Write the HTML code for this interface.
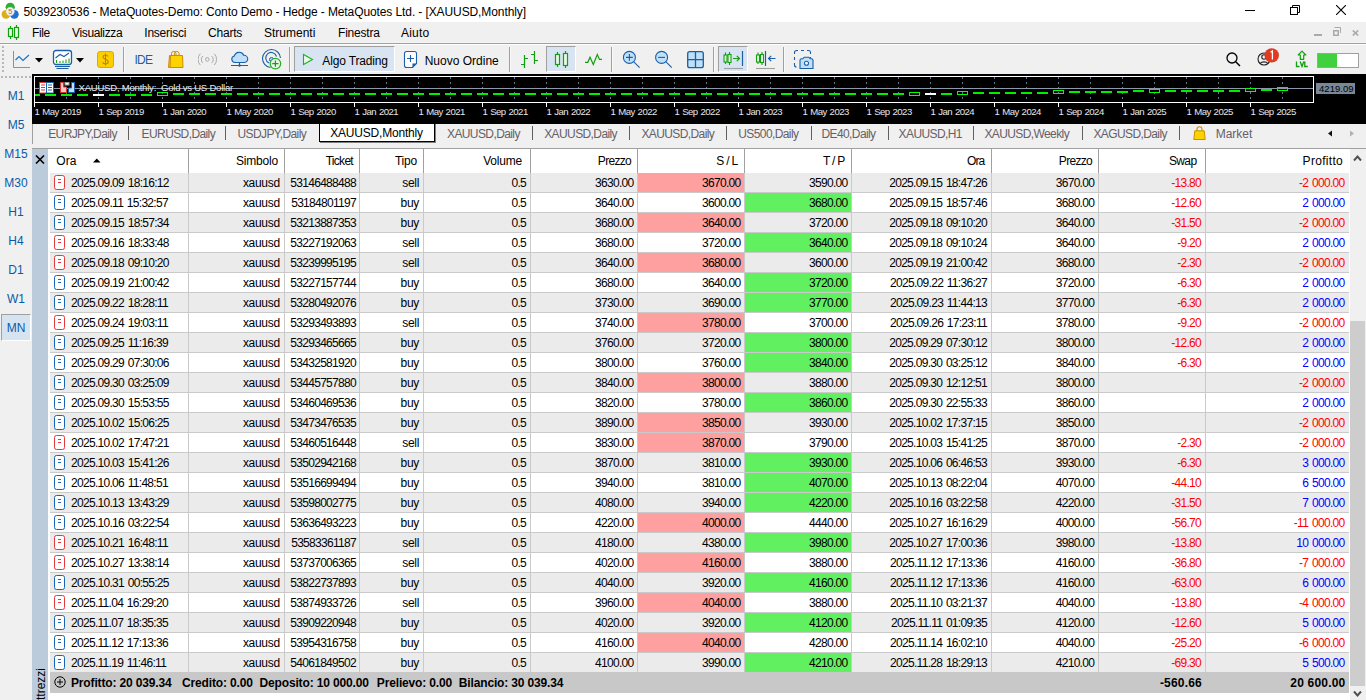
<!DOCTYPE html>
<html><head><meta charset="utf-8"><title>MetaTrader 5</title>
<style>
html,body{margin:0;padding:0;}
body{width:1366px;height:700px;overflow:hidden;position:relative;background:#f0f0f0;font-family:"Liberation Sans", sans-serif;font-size:12px;}
svg{display:block;}
</style></head><body>
<div style="position:absolute;left:0px;top:0px;width:1366px;height:22px;background:#ffffff;"></div>
<svg style="position:absolute;left:0px;top:0px;" width="22" height="22" viewBox="0 0 22 22">
<circle cx="10.2" cy="7.3" r="4.6" fill="#2fae2f"/>
<circle cx="6" cy="14.3" r="4.4" fill="#dcae18"/>
<circle cx="14.3" cy="14.3" r="4.4" fill="#1f6fd8"/>
<circle cx="10.2" cy="11.5" r="4.2" fill="#f2f2f2" stroke="#d0d0d0" stroke-width="0.5"/>
<text x="10.3" y="14.3" font-size="7.5" font-family="Liberation Sans" font-weight="400" fill="#e05a10" text-anchor="middle">5</text>
</svg>
<div style="position:absolute;left:23.5px;top:5.84px;font-size:12px;line-height:12px;color:#000;font-weight:400;letter-spacing:-0.1px;white-space:pre;">5039230536 - MetaQuotes-Demo: Conto Demo - Hedge - MetaQuotes Ltd. - [XAUUSD,Monthly]</div>
<div style="position:absolute;left:1245px;top:10px;width:10px;height:1px;background:#000;"></div>
<svg style="position:absolute;left:1290px;top:5px;" width="11" height="11" viewBox="0 0 11 11"><rect x="0.5" y="2.5" width="7" height="7" fill="none" stroke="#000"/><path d="M2.5 2.5V0.5H9.5V7.5H7.5" fill="none" stroke="#000"/></svg>
<svg style="position:absolute;left:1336px;top:5px;" width="10" height="10" viewBox="0 0 10 10"><path d="M0 0L10 10M10 0L0 10" stroke="#000" stroke-width="1.1"/></svg>
<div style="position:absolute;left:0px;top:22px;width:1366px;height:20px;background:#f0f0f0;"></div>
<div style="position:absolute;left:0px;top:42px;width:1366px;height:1px;background:#f4f4f4;"></div>
<div style="position:absolute;left:0px;top:43px;width:1366px;height:1px;background:#a0a0a0;"></div>
<div style="position:absolute;left:0px;top:44px;width:1366px;height:1px;background:#ffffff;"></div>
<svg style="position:absolute;left:7px;top:24px;" width="14" height="17" viewBox="0 0 14 17">
<path d="M3.5 2V15M9.5 1V16" stroke="#10a010" stroke-width="1.2"/>
<rect x="1.5" y="4.5" width="4" height="8" fill="#e8f8e8" stroke="#10a010" stroke-width="1.2"/>
<rect x="7.5" y="3.5" width="4" height="10" fill="#e8f8e8" stroke="#10a010" stroke-width="1.2"/>
</svg>
<div style="position:absolute;left:32px;top:26.84px;font-size:12px;line-height:12px;color:#000;font-weight:400;letter-spacing:-0.4px;white-space:pre;">File</div>
<div style="position:absolute;left:72px;top:26.84px;font-size:12px;line-height:12px;color:#000;font-weight:400;letter-spacing:-0.35px;white-space:pre;">Visualizza</div>
<div style="position:absolute;left:144.3px;top:26.84px;font-size:12px;line-height:12px;color:#000;font-weight:400;letter-spacing:-0.25px;white-space:pre;">Inserisci</div>
<div style="position:absolute;left:208px;top:26.84px;font-size:12px;line-height:12px;color:#000;font-weight:400;letter-spacing:-0.2px;white-space:pre;">Charts</div>
<div style="position:absolute;left:264px;top:26.84px;font-size:12px;line-height:12px;color:#000;font-weight:400;white-space:pre;">Strumenti</div>
<div style="position:absolute;left:338px;top:26.84px;font-size:12px;line-height:12px;color:#000;font-weight:400;letter-spacing:-0.2px;white-space:pre;">Finestra</div>
<div style="position:absolute;left:401px;top:26.84px;font-size:12px;line-height:12px;color:#000;font-weight:400;letter-spacing:0.2px;white-space:pre;">Aiuto</div>
<div style="position:absolute;left:1314px;top:34px;width:8px;height:2px;background:#aaaaaa;"></div>
<svg style="position:absolute;left:1332px;top:27px;" width="9" height="9" viewBox="0 0 9 9"><rect x="1" y="3" width="6" height="6" fill="#aaaaaa"/><rect x="2.5" y="4.5" width="3" height="3" fill="#f0f0f0"/><path d="M2.5 0.5H8.5V6" fill="none" stroke="#aaaaaa"/></svg>
<svg style="position:absolute;left:1352px;top:30px;" width="7" height="6" viewBox="0 0 7 6"><path d="M0.8 0.5L6.2 5.5M6.2 0.5L0.8 5.5" stroke="#aaaaaa" stroke-width="1.7"/></svg>
<div style="position:absolute;left:0px;top:45px;width:1366px;height:29px;background:#f0f0f0;"></div>
<svg style="position:absolute;left:12px;top:50px;" width="20" height="19" viewBox="0 0 20 19"><path d="M1.5 1V17.5H18" stroke="#909090" fill="none"/><path d="M3.5 10L7 6.5L11 10.5L17 5" stroke="#1a73c8" stroke-width="1.2" fill="none"/></svg>
<svg style="position:absolute;left:35px;top:58px;" width="9" height="5" viewBox="0 0 9 5"><path d="M0 0H8L4 4.5Z" fill="#000"/></svg>
<svg style="position:absolute;left:52px;top:49px;" width="21" height="21" viewBox="0 0 21 21"><rect x="1.5" y="1.5" width="18" height="14" rx="2.5" fill="#fff" stroke="#1a5fa8" stroke-width="1.3"/>
<path d="M3.5 9L8 5.5L12 7.5L17 4" stroke="#1a5fa8" stroke-width="1.1" fill="none"/>
<path d="M4.5 14V11M8 14V12M11 14V11.5M14 14V10.5M17 14V9.5" stroke="#20a020" stroke-width="1.1"/>
<path d="M3 17.5H18M4.5 19.5H16.5" stroke="#1a5fa8" stroke-width="1.1"/></svg>
<svg style="position:absolute;left:76px;top:58px;" width="9" height="5" viewBox="0 0 9 5"><path d="M0 0H8L4 4.5Z" fill="#000"/></svg>
<svg style="position:absolute;left:97px;top:51px;" width="17" height="17" viewBox="0 0 17 17"><rect x="0.5" y="0.5" width="16" height="16" rx="2.5" fill="#fcd000" stroke="#e0a800"/><path d="M11 5.5C10.5 4.3 9.5 4 8.5 4C7 4 6 4.8 6 6C6 8.8 11.2 7.8 11.2 10.8C11.2 12.1 10 13 8.5 13C7 13 6 12.3 5.7 11.2M8.5 2.5V14.5" stroke="#c08000" stroke-width="1.1" fill="none"/></svg>
<div style="position:absolute;left:123px;top:47px;width:1px;height:25px;background:#a0a0a0;"></div>
<div style="position:absolute;left:124px;top:47px;width:1px;height:25px;background:#fafafa;"></div>
<div style="position:absolute;left:134.5px;top:54.34px;font-size:12px;line-height:12px;color:#1a5fa8;font-weight:400;letter-spacing:-0.8px;white-space:pre;">IDE</div>
<svg style="position:absolute;left:167px;top:50px;" width="17" height="19" viewBox="0 0 17 19"><path d="M4.5 6V3.2A2.3 2.3 0 0 1 9 3.2V6M7.5 6V3.2A2.3 2.3 0 0 1 12 3.2V6" stroke="#d08c00" stroke-width="1" fill="none"/><path d="M2.5 5.5H15.5L16 17.5H1.5Z" fill="#fcd200" stroke="#d08c00"/><path d="M3.5 5.5L3 17.5" stroke="#d08c00"/></svg>
<svg style="position:absolute;left:198px;top:52px;" width="19" height="15" viewBox="0 0 19 15"><circle cx="9.3" cy="7.4" r="1.8" fill="none" stroke="#a8a8a8" stroke-width="1"/><path d="M5 4A4.5 4.5 0 0 0 5 11M13.6 4A4.5 4.5 0 0 1 13.6 11M2.3 1.8A8 8 0 0 0 2.3 13M16.3 1.8A8 8 0 0 1 16.3 13" fill="none" stroke="#a8a8a8" stroke-width="1"/></svg>
<svg style="position:absolute;left:230px;top:50px;" width="19" height="18" viewBox="0 0 19 18"><path d="M5 12.5A3.3 3.3 0 0 1 4.3 6A5 5 0 0 1 13.7 5.3A3.6 3.6 0 0 1 14.5 12.5Z" fill="#bfe0f8" stroke="#1a5fa8" stroke-width="1.1"/><path d="M9.5 12.5V15M1 15.5H18" stroke="#1a5fa8" stroke-width="1.1"/><circle cx="9.5" cy="15.5" r="1.2" fill="#1a5fa8"/></svg>
<svg style="position:absolute;left:261px;top:49px;" width="22" height="22" viewBox="0 0 22 22"><path d="M9.5 18.5A9 9 0 1 1 19.5 9" fill="none" stroke="#1a5fa8" stroke-width="1.1"/><path d="M8 14A5.5 5.5 0 1 1 15.5 7.5" fill="none" stroke="#1a5fa8" stroke-width="1.1"/><circle cx="10.5" cy="10.5" r="2" fill="#bfe0f8" stroke="#1a5fa8"/><circle cx="14.4" cy="14.6" r="5.3" fill="#e8f8e8" stroke="#20b020" stroke-width="1.2"/><path d="M14.4 11.5V17.7M11.3 14.6H17.5" stroke="#10a010" stroke-width="1.2"/></svg>
<div style="position:absolute;left:289px;top:47px;width:1px;height:25px;background:#a0a0a0;"></div>
<div style="position:absolute;left:290px;top:47px;width:1px;height:25px;background:#fafafa;"></div>
<div style="position:absolute;left:294px;top:46px;width:101px;height:26px;background:#d8e4f2;border-left:1px solid #a0a0a0;border-top:1px solid #a0a0a0;border-right:1px solid #fff;border-bottom:1px solid #fff;box-sizing:border-box;"></div>
<svg style="position:absolute;left:302px;top:53px;" width="13" height="13" viewBox="0 0 13 13"><path d="M1.5 1.5V11.5L10.5 6.5Z" fill="#e8f8e8" stroke="#20b020" stroke-width="1.1"/></svg>
<div style="position:absolute;left:322.3px;top:54.540000000000006px;font-size:12px;line-height:12px;color:#000;font-weight:400;letter-spacing:-0.15px;white-space:pre;">Algo Trading</div>
<svg style="position:absolute;left:403px;top:50px;" width="16" height="19" viewBox="0 0 16 19"><path d="M3.5 1.5H11.5A2 2 0 0 1 13.5 3.5V13.5L9.5 17.5H3.5A2 2 0 0 1 1.5 15.5V3.5A2 2 0 0 1 3.5 1.5Z" fill="#fff" stroke="#1a5fa8" stroke-width="1.1"/><path d="M7.5 5V12M4 8.5H11" stroke="#1a5fa8" stroke-width="1.1"/><path d="M9.5 17.5V13.5H13.5Z" fill="#1a5fa8"/></svg>
<div style="position:absolute;left:424.7px;top:54.540000000000006px;font-size:12px;line-height:12px;color:#000;font-weight:400;white-space:pre;">Nuovo Ordine</div>
<div style="position:absolute;left:509px;top:47px;width:1px;height:25px;background:#a0a0a0;"></div>
<div style="position:absolute;left:510px;top:47px;width:1px;height:25px;background:#fafafa;"></div>
<svg style="position:absolute;left:519px;top:49px;" width="21" height="21" viewBox="0 0 21 21"><path d="M5.5 6V19M2 15.5H5.5M5.5 9.5H9M15.5 2V15M12 5.5H15.5M15.5 11.5H19" stroke="#10a010" stroke-width="1.2"/></svg>
<div style="position:absolute;left:546px;top:46px;width:30px;height:26px;background:#d8e4f2;border-left:1px solid #a0a0a0;border-top:1px solid #a0a0a0;border-right:1px solid #fff;border-bottom:1px solid #fff;box-sizing:border-box;"></div>
<svg style="position:absolute;left:552px;top:49px;" width="18" height="21" viewBox="0 0 18 21"><path d="M5.5 3V18M13.5 2V19" stroke="#10a010" stroke-width="1.2"/><rect x="3.5" y="5.5" width="4" height="10" fill="#e8f8e8" stroke="#10a010" stroke-width="1.2"/><rect x="11.5" y="4.5" width="4" height="12" fill="#e8f8e8" stroke="#10a010" stroke-width="1.2"/></svg>
<svg style="position:absolute;left:584px;top:52px;" width="19" height="14" viewBox="0 0 19 14"><path d="M1 10.3H3.8L6 5.2L9.3 12.5L13.3 2.6L15.5 7.4H18" stroke="#10a010" stroke-width="1.2" fill="none"/></svg>
<div style="position:absolute;left:611px;top:47px;width:1px;height:25px;background:#a0a0a0;"></div>
<div style="position:absolute;left:612px;top:47px;width:1px;height:25px;background:#fafafa;"></div>
<svg style="position:absolute;left:621px;top:49px;" width="20" height="20" viewBox="0 0 20 20"><circle cx="8.4" cy="8.4" r="6" fill="#bfe0f8" stroke="#1a5fa8" stroke-width="1.1"/><path d="M12.8 12.8L18.6 18.6" stroke="#1a5fa8" stroke-width="1.1"/><path d="M8.4 5V11.8M5 8.4H11.8" stroke="#1a5fa8" stroke-width="1.1"/></svg>
<svg style="position:absolute;left:653px;top:49px;" width="20" height="20" viewBox="0 0 20 20"><circle cx="8.6" cy="8.4" r="6" fill="#bfe0f8" stroke="#1a5fa8" stroke-width="1.1"/><path d="M13 12.8L18.8 18.6" stroke="#1a5fa8" stroke-width="1.1"/><path d="M5.2 8.4H12" stroke="#1a5fa8" stroke-width="1.1"/></svg>
<svg style="position:absolute;left:686px;top:50px;" width="19" height="19" viewBox="0 0 19 19"><rect x="1.7" y="1.7" width="15.6" height="16" rx="2" fill="#bfe0f8" stroke="#1a5fa8" stroke-width="1.3"/><path d="M9.5 1.7V17.7M1.7 9.7H17.3" stroke="#1a5fa8" stroke-width="1.3"/></svg>
<div style="position:absolute;left:713px;top:47px;width:1px;height:25px;background:#a0a0a0;"></div>
<div style="position:absolute;left:714px;top:47px;width:1px;height:25px;background:#fafafa;"></div>
<div style="position:absolute;left:718px;top:46px;width:30px;height:26px;background:#d8e4f2;border-left:1px solid #a0a0a0;border-top:1px solid #a0a0a0;border-right:1px solid #fff;border-bottom:1px solid #fff;box-sizing:border-box;"></div>
<svg style="position:absolute;left:722px;top:49px;" width="24" height="21" viewBox="0 0 24 21"><path d="M3.5 3.5V15M7.5 3V16" stroke="#10a010" stroke-width="1.1"/><rect x="2" y="6" width="3" height="7" fill="#e8f8e8" stroke="#10a010" stroke-width="1.1"/><rect x="6" y="5.5" width="3" height="8" fill="#e8f8e8" stroke="#10a010" stroke-width="1.1"/><path d="M11 9.5H17.5M14.8 6.8L17.5 9.5L14.8 12.2" stroke="#10a010" stroke-width="1.2" fill="none"/><path d="M20.5 2V17" stroke="#1a5fa8" stroke-width="1.2"/><path d="M2 19.5H21" stroke="#a0a0a0" stroke-width="1.1"/></svg>
<svg style="position:absolute;left:755px;top:49px;" width="24" height="21" viewBox="0 0 24 21"><path d="M3 3.5V15M7 3V16" stroke="#10a010" stroke-width="1.1"/><rect x="1.5" y="6" width="3" height="7" fill="#e8f8e8" stroke="#10a010" stroke-width="1.1"/><rect x="5.5" y="5.5" width="3" height="8" fill="#e8f8e8" stroke="#10a010" stroke-width="1.1"/><path d="M10.5 2V17" stroke="#1a5fa8" stroke-width="1.2"/><path d="M13.5 9.5H20.5M16.2 6.8L13.5 9.5L16.2 12.2" stroke="#1a5fa8" stroke-width="1.2" fill="none"/><path d="M1 19.5H20" stroke="#a0a0a0" stroke-width="1.1"/></svg>
<div style="position:absolute;left:783px;top:47px;width:1px;height:25px;background:#a0a0a0;"></div>
<div style="position:absolute;left:784px;top:47px;width:1px;height:25px;background:#fafafa;"></div>
<svg style="position:absolute;left:793px;top:49px;" width="22" height="21" viewBox="0 0 22 21"><path d="M5 1.5H3.5A2 2 0 0 0 1.5 3.5V5M1.5 8V11M1.5 14V16A2 2 0 0 0 3.5 18M8 1.5H11M14 1.5H15.5A2 2 0 0 1 17.5 3.5V5M17.5 8V9" stroke="#1a5fa8" stroke-width="1.1" fill="none"/><path d="M7 19.5V11.3A1.5 1.5 0 0 1 8.5 9.8H9.8L11.2 8.2H15.8L17.2 9.8H18.5A1.5 1.5 0 0 1 20 11.3V19.5Z" fill="#bfe0f8" stroke="#1a5fa8" stroke-width="1.1"/><circle cx="13.5" cy="14.3" r="2" fill="#fff" stroke="#1a5fa8" stroke-width="1.1"/></svg>
<svg style="position:absolute;left:1226px;top:52px;" width="15" height="15" viewBox="0 0 15 15"><circle cx="6" cy="6" r="5" fill="none" stroke="#000" stroke-width="1.3"/><path d="M9.5 9.5L14 14" stroke="#000" stroke-width="1.5"/></svg>
<svg style="position:absolute;left:1256px;top:48px;" width="24" height="20" viewBox="0 0 24 20"><circle cx="8" cy="11" r="6" fill="none" stroke="#202020" stroke-width="1.1"/><circle cx="8" cy="9" r="2.2" fill="none" stroke="#202020" stroke-width="1.1"/><path d="M4 15.5A4.8 3.6 0 0 1 12 15.5" fill="none" stroke="#202020" stroke-width="1.1"/><circle cx="15.7" cy="7.4" r="7.2" fill="#e03a20"/><path d="M14.6 4.2L16.4 3V11.5" fill="none" stroke="#fff" stroke-width="1.3"/></svg>
<svg style="position:absolute;left:1294px;top:50px;" width="16" height="18" viewBox="0 0 16 18"><path d="M8 1.2L4.2 5H6.3V9.3H9.7V5H11.8Z" fill="#e8f8e8" stroke="#10a010" stroke-width="1.2" stroke-linejoin="round"/><path d="M2.5 11.5V16.5H5.5M6.2 11.5L8 16.5L9.8 11.5M10.8 11.5V16.5H13.8" fill="none" stroke="#10a010" stroke-width="1.3"/></svg>
<div style="position:absolute;left:1317px;top:53px;width:42px;height:15px;background:#ffffff;border:1px solid #a0a0a0;box-sizing:border-box;"></div>
<div style="position:absolute;left:1318px;top:54px;width:19px;height:13px;background:#40d040;"></div>
<div style="position:absolute;left:0px;top:74px;width:32px;height:626px;background:#f0f0f0;"></div>
<div style="position:absolute;left:2px;top:46px;width:2px;height:2px;background:#b8b8b8;"></div>
<div style="position:absolute;left:2px;top:50px;width:2px;height:2px;background:#b8b8b8;"></div>
<div style="position:absolute;left:2px;top:54px;width:2px;height:2px;background:#b8b8b8;"></div>
<div style="position:absolute;left:2px;top:58px;width:2px;height:2px;background:#b8b8b8;"></div>
<div style="position:absolute;left:2px;top:62px;width:2px;height:2px;background:#b8b8b8;"></div>
<div style="position:absolute;left:2px;top:66px;width:2px;height:2px;background:#b8b8b8;"></div>
<div style="position:absolute;left:2px;top:70px;width:2px;height:2px;background:#b8b8b8;"></div>
<div style="position:absolute;left:1px;top:76px;width:2px;height:2px;background:#b8b8b8;"></div>
<div style="position:absolute;left:5px;top:76px;width:2px;height:2px;background:#b8b8b8;"></div>
<div style="position:absolute;left:9px;top:76px;width:2px;height:2px;background:#b8b8b8;"></div>
<div style="position:absolute;left:13px;top:76px;width:2px;height:2px;background:#b8b8b8;"></div>
<div style="position:absolute;left:17px;top:76px;width:2px;height:2px;background:#b8b8b8;"></div>
<div style="position:absolute;left:21px;top:76px;width:2px;height:2px;background:#b8b8b8;"></div>
<div style="position:absolute;left:25px;top:76px;width:2px;height:2px;background:#b8b8b8;"></div>
<div style="position:absolute;left:29px;top:76px;width:2px;height:2px;background:#b8b8b8;"></div>
<div style="position:absolute;left:1px;top:314px;width:30px;height:27px;background:#d6e4f2;border-left:1px solid #a0a0a0;border-top:1px solid #a0a0a0;border-right:1px solid #fff;border-bottom:1px solid #fff;box-sizing:border-box;"></div>
<div style="position:absolute;left:-184px;width:400px;text-align:center;top:89.84px;font-size:12px;line-height:12px;color:#0b5aa8;font-weight:400;white-space:pre;">M1</div>
<div style="position:absolute;left:-184px;width:400px;text-align:center;top:118.84px;font-size:12px;line-height:12px;color:#0b5aa8;font-weight:400;white-space:pre;">M5</div>
<div style="position:absolute;left:-184px;width:400px;text-align:center;top:147.84px;font-size:12px;line-height:12px;color:#0b5aa8;font-weight:400;white-space:pre;">M15</div>
<div style="position:absolute;left:-184px;width:400px;text-align:center;top:176.84px;font-size:12px;line-height:12px;color:#0b5aa8;font-weight:400;white-space:pre;">M30</div>
<div style="position:absolute;left:-184px;width:400px;text-align:center;top:205.84px;font-size:12px;line-height:12px;color:#0b5aa8;font-weight:400;white-space:pre;">H1</div>
<div style="position:absolute;left:-184px;width:400px;text-align:center;top:234.84px;font-size:12px;line-height:12px;color:#0b5aa8;font-weight:400;white-space:pre;">H4</div>
<div style="position:absolute;left:-184px;width:400px;text-align:center;top:263.84px;font-size:12px;line-height:12px;color:#0b5aa8;font-weight:400;white-space:pre;">D1</div>
<div style="position:absolute;left:-184px;width:400px;text-align:center;top:292.84px;font-size:12px;line-height:12px;color:#0b5aa8;font-weight:400;white-space:pre;">W1</div>
<div style="position:absolute;left:-184px;width:400px;text-align:center;top:321.84px;font-size:12px;line-height:12px;color:#0b5aa8;font-weight:400;white-space:pre;">MN</div>
<div style="position:absolute;left:32px;top:74px;width:1334px;height:50px;background:#000;"></div>
<svg style="position:absolute;left:0;top:0" width="1366" height="124" viewBox="0 0 1366 124"><path d="M66.5 77V102" stroke="#5f7690" stroke-dasharray="2 3"/><path d="M98.5 77V102" stroke="#5f7690" stroke-dasharray="2 3"/><path d="M130.5 77V102" stroke="#5f7690" stroke-dasharray="2 3"/><path d="M162.5 77V102" stroke="#5f7690" stroke-dasharray="2 3"/><path d="M194.5 77V102" stroke="#5f7690" stroke-dasharray="2 3"/><path d="M226.5 77V102" stroke="#5f7690" stroke-dasharray="2 3"/><path d="M258.5 77V102" stroke="#5f7690" stroke-dasharray="2 3"/><path d="M290.5 77V102" stroke="#5f7690" stroke-dasharray="2 3"/><path d="M322.5 77V102" stroke="#5f7690" stroke-dasharray="2 3"/><path d="M354.5 77V102" stroke="#5f7690" stroke-dasharray="2 3"/><path d="M386.5 77V102" stroke="#5f7690" stroke-dasharray="2 3"/><path d="M418.5 77V102" stroke="#5f7690" stroke-dasharray="2 3"/><path d="M450.5 77V102" stroke="#5f7690" stroke-dasharray="2 3"/><path d="M482.5 77V102" stroke="#5f7690" stroke-dasharray="2 3"/><path d="M514.5 77V102" stroke="#5f7690" stroke-dasharray="2 3"/><path d="M546.5 77V102" stroke="#5f7690" stroke-dasharray="2 3"/><path d="M578.5 77V102" stroke="#5f7690" stroke-dasharray="2 3"/><path d="M610.5 77V102" stroke="#5f7690" stroke-dasharray="2 3"/><path d="M642.5 77V102" stroke="#5f7690" stroke-dasharray="2 3"/><path d="M674.5 77V102" stroke="#5f7690" stroke-dasharray="2 3"/><path d="M706.5 77V102" stroke="#5f7690" stroke-dasharray="2 3"/><path d="M738.5 77V102" stroke="#5f7690" stroke-dasharray="2 3"/><path d="M770.5 77V102" stroke="#5f7690" stroke-dasharray="2 3"/><path d="M802.5 77V102" stroke="#5f7690" stroke-dasharray="2 3"/><path d="M834.5 77V102" stroke="#5f7690" stroke-dasharray="2 3"/><path d="M866.5 77V102" stroke="#5f7690" stroke-dasharray="2 3"/><path d="M898.5 77V102" stroke="#5f7690" stroke-dasharray="2 3"/><path d="M930.5 77V102" stroke="#5f7690" stroke-dasharray="2 3"/><path d="M962.5 77V102" stroke="#5f7690" stroke-dasharray="2 3"/><path d="M994.5 77V102" stroke="#5f7690" stroke-dasharray="2 3"/><path d="M1026.5 77V102" stroke="#5f7690" stroke-dasharray="2 3"/><path d="M1058.5 77V102" stroke="#5f7690" stroke-dasharray="2 3"/><path d="M1090.5 77V102" stroke="#5f7690" stroke-dasharray="2 3"/><path d="M1122.5 77V102" stroke="#5f7690" stroke-dasharray="2 3"/><path d="M1154.5 77V102" stroke="#5f7690" stroke-dasharray="2 3"/><path d="M1186.5 77V102" stroke="#5f7690" stroke-dasharray="2 3"/><path d="M1218.5 77V102" stroke="#5f7690" stroke-dasharray="2 3"/><path d="M1250.5 77V102" stroke="#5f7690" stroke-dasharray="2 3"/><path d="M1282.5 77V102" stroke="#5f7690" stroke-dasharray="2 3"/><path d="M35 88.5H1313" stroke="#8a9aaa"/><rect x="34.5" y="76.5" width="1279" height="26" fill="none" stroke="#fff"/><path d="M34.5 102V107" stroke="#fff"/><path d="M98.5 102V107" stroke="#fff"/><path d="M162.5 102V107" stroke="#fff"/><path d="M226.5 102V107" stroke="#fff"/><path d="M290.5 102V107" stroke="#fff"/><path d="M354.5 102V107" stroke="#fff"/><path d="M418.5 102V107" stroke="#fff"/><path d="M482.5 102V107" stroke="#fff"/><path d="M546.5 102V107" stroke="#fff"/><path d="M610.5 102V107" stroke="#fff"/><path d="M674.5 102V107" stroke="#fff"/><path d="M738.5 102V107" stroke="#fff"/><path d="M802.5 102V107" stroke="#fff"/><path d="M866.5 102V107" stroke="#fff"/><path d="M930.5 102V107" stroke="#fff"/><path d="M994.5 102V107" stroke="#fff"/><path d="M1058.5 102V107" stroke="#fff"/><path d="M1122.5 102V107" stroke="#fff"/><path d="M1186.5 102V107" stroke="#fff"/><path d="M1250.5 102V107" stroke="#fff"/><rect x="35" y="94" width="5" height="2" fill="#00ee00"/><rect x="45" y="94" width="11" height="2" fill="#00ee00"/><rect x="61" y="94" width="11" height="2" fill="#00ee00"/><rect x="77" y="94" width="11" height="2" fill="#00ee00"/><rect x="93" y="94" width="11" height="2" fill="#fff"/><rect x="109" y="94" width="11" height="2" fill="#00ee00"/><rect x="125" y="94" width="11" height="2" fill="#00ee00"/><rect x="141" y="94" width="11" height="2" fill="#00ee00"/><rect x="157.5" y="92.5" width="10" height="3" fill="none" stroke="#00ff00"/><rect x="173" y="93" width="11" height="2" fill="#00ee00"/><rect x="189" y="93" width="11" height="2" fill="#00ee00"/><rect x="205" y="93" width="11" height="2" fill="#00ee00"/><rect x="221" y="93" width="11" height="2" fill="#00ee00"/><rect x="237" y="93" width="11" height="2" fill="#00ee00"/><rect x="253" y="93" width="11" height="2" fill="#00ee00"/><rect x="269" y="93" width="11" height="2" fill="#00ee00"/><rect x="285" y="93" width="11" height="2" fill="#00ee00"/><rect x="301" y="93" width="11" height="2" fill="#00ee00"/><rect x="317" y="93" width="11" height="2" fill="#00ee00"/><rect x="333" y="93" width="11" height="2" fill="#00ee00"/><rect x="349" y="93" width="11" height="2" fill="#00ee00"/><rect x="365" y="93" width="11" height="2" fill="#00ee00"/><rect x="381" y="93" width="11" height="2" fill="#00ee00"/><rect x="397" y="93" width="11" height="2" fill="#00ee00"/><rect x="413" y="93" width="11" height="2" fill="#00ee00"/><rect x="429" y="93" width="11" height="2" fill="#00ee00"/><rect x="445" y="93" width="11" height="2" fill="#00ee00"/><rect x="461" y="93" width="11" height="2" fill="#00ee00"/><rect x="477" y="93" width="11" height="2" fill="#00ee00"/><rect x="493" y="93" width="11" height="2" fill="#00ee00"/><rect x="509" y="93" width="11" height="2" fill="#00ee00"/><rect x="525" y="93" width="11" height="2" fill="#00ee00"/><rect x="541" y="93" width="11" height="2" fill="#00ee00"/><rect x="557" y="93" width="11" height="2" fill="#00ee00"/><rect x="573" y="93" width="11" height="2" fill="#00ee00"/><rect x="589" y="93" width="11" height="2" fill="#00ee00"/><rect x="605" y="93" width="11" height="2" fill="#00ee00"/><rect x="621" y="93" width="11" height="2" fill="#00ee00"/><rect x="637" y="93" width="11" height="2" fill="#00ee00"/><rect x="653" y="93" width="11" height="2" fill="#00ee00"/><rect x="669" y="93" width="11" height="2" fill="#00ee00"/><rect x="685" y="93" width="11" height="2" fill="#00ee00"/><rect x="701" y="93" width="11" height="2" fill="#00ee00"/><rect x="717" y="93" width="11" height="2" fill="#00ee00"/><rect x="733" y="93" width="11" height="2" fill="#00ee00"/><rect x="749" y="93" width="11" height="2" fill="#00ee00"/><rect x="765" y="93" width="11" height="2" fill="#00ee00"/><rect x="781" y="93" width="11" height="2" fill="#00ee00"/><rect x="797" y="93" width="11" height="2" fill="#00ee00"/><rect x="813" y="93" width="11" height="2" fill="#00ee00"/><rect x="829" y="93" width="11" height="2" fill="#00ee00"/><rect x="845" y="93" width="11" height="2" fill="#00ee00"/><rect x="861" y="93" width="11" height="2" fill="#00ee00"/><rect x="877" y="93" width="11" height="2" fill="#00ee00"/><rect x="893" y="93" width="11" height="2" fill="#00ee00"/><rect x="909.5" y="92.5" width="10" height="3" fill="none" stroke="#00ff00"/><rect x="925" y="93" width="11" height="2" fill="#fff"/><rect x="941" y="93" width="11" height="2" fill="#00ee00"/><rect x="957.5" y="91.5" width="10" height="3" fill="none" stroke="#00ff00"/><rect x="973" y="92" width="11" height="2" fill="#00ee00"/><rect x="989" y="92" width="11" height="2" fill="#00ee00"/><rect x="1005" y="92" width="11" height="2" fill="#00ee00"/><rect x="1021" y="92" width="11" height="2" fill="#00ee00"/><rect x="1037" y="92" width="11" height="2" fill="#00ee00"/><rect x="1053.5" y="90.5" width="10" height="3" fill="none" stroke="#00ff00"/><rect x="1069" y="91" width="11" height="2" fill="#00ee00"/><rect x="1085" y="91" width="11" height="2" fill="#00ee00"/><rect x="1101" y="91" width="11" height="2" fill="#00ee00"/><rect x="1117" y="91" width="11" height="2" fill="#00ee00"/><rect x="1133" y="90" width="11" height="2" fill="#00ee00"/><rect x="1149.5" y="89.5" width="10" height="3" fill="none" stroke="#00ff00"/><rect x="1165" y="90" width="11" height="2" fill="#00ee00"/><rect x="1181" y="90" width="11" height="2" fill="#00ee00"/><rect x="1197" y="90" width="11" height="2" fill="#00ee00"/><rect x="1213" y="90" width="11" height="2" fill="#00ee00"/><rect x="1229" y="90" width="11" height="2" fill="#00ee00"/><rect x="1245.5" y="88.5" width="10" height="3" fill="none" stroke="#00ff00"/><rect x="1261" y="89" width="11" height="2" fill="#00ee00"/><rect x="1277.5" y="87.5" width="10" height="3" fill="none" stroke="#00ff00"/><rect x="1316" y="83" width="39" height="11" fill="#778899"/></svg>
<div style="position:absolute;left:1319px;top:83.96000000000001px;font-size:9.5px;line-height:9.5px;color:#000;font-weight:400;letter-spacing:0.05px;white-space:pre;">4219.09</div>
<svg style="position:absolute;left:39px;top:82px;" width="16" height="12" viewBox="0 0 16 12"><rect x="0.5" y="0.5" width="7" height="10.5" fill="#fff" stroke="#e03030"/><rect x="7.5" y="0.5" width="7" height="10.5" fill="#fff" stroke="#1a60b0"/><path d="M2 3H6M2 5.5H6M2 8H6" stroke="#e03030"/><path d="M9 3H13M9 5.5H13M9 8H13" stroke="#1a60b0"/></svg>
<svg style="position:absolute;left:60px;top:82px;" width="16" height="12" viewBox="0 0 16 12"><path d="M0.5 0.5H3.5V5H6.5V10.5H0.5Z" fill="#f8c8c0" stroke="#e03030"/><rect x="5" y="0.5" width="4" height="2.5" fill="#fff" stroke="#a0a0a0"/><path d="M8.5 10.5V6H11.5V0.5H14.5V10.5Z" fill="#bfe0f8" stroke="#1a60b0"/></svg>
<div style="position:absolute;left:78.5px;top:82.75999999999999px;font-size:9.5px;line-height:9.5px;color:#ececec;font-weight:400;letter-spacing:-0.2px;white-space:pre;">XAUUSD, Monthly:  Gold vs US Dollar</div>
<div style="position:absolute;left:34.5px;top:107.47px;font-size:9.6px;line-height:9.6px;color:#e8e8e8;font-weight:400;letter-spacing:-0.55px;word-spacing:0.8px;white-space:pre;">1 May 2019</div>
<div style="position:absolute;left:98.5px;top:107.47px;font-size:9.6px;line-height:9.6px;color:#e8e8e8;font-weight:400;letter-spacing:-0.55px;word-spacing:0.8px;white-space:pre;">1 Sep 2019</div>
<div style="position:absolute;left:162.5px;top:107.47px;font-size:9.6px;line-height:9.6px;color:#e8e8e8;font-weight:400;letter-spacing:-0.55px;word-spacing:0.8px;white-space:pre;">1 Jan 2020</div>
<div style="position:absolute;left:226.5px;top:107.47px;font-size:9.6px;line-height:9.6px;color:#e8e8e8;font-weight:400;letter-spacing:-0.55px;word-spacing:0.8px;white-space:pre;">1 May 2020</div>
<div style="position:absolute;left:290.5px;top:107.47px;font-size:9.6px;line-height:9.6px;color:#e8e8e8;font-weight:400;letter-spacing:-0.55px;word-spacing:0.8px;white-space:pre;">1 Sep 2020</div>
<div style="position:absolute;left:354.5px;top:107.47px;font-size:9.6px;line-height:9.6px;color:#e8e8e8;font-weight:400;letter-spacing:-0.55px;word-spacing:0.8px;white-space:pre;">1 Jan 2021</div>
<div style="position:absolute;left:418.5px;top:107.47px;font-size:9.6px;line-height:9.6px;color:#e8e8e8;font-weight:400;letter-spacing:-0.55px;word-spacing:0.8px;white-space:pre;">1 May 2021</div>
<div style="position:absolute;left:482.5px;top:107.47px;font-size:9.6px;line-height:9.6px;color:#e8e8e8;font-weight:400;letter-spacing:-0.55px;word-spacing:0.8px;white-space:pre;">1 Sep 2021</div>
<div style="position:absolute;left:546.5px;top:107.47px;font-size:9.6px;line-height:9.6px;color:#e8e8e8;font-weight:400;letter-spacing:-0.55px;word-spacing:0.8px;white-space:pre;">1 Jan 2022</div>
<div style="position:absolute;left:610.5px;top:107.47px;font-size:9.6px;line-height:9.6px;color:#e8e8e8;font-weight:400;letter-spacing:-0.55px;word-spacing:0.8px;white-space:pre;">1 May 2022</div>
<div style="position:absolute;left:674.5px;top:107.47px;font-size:9.6px;line-height:9.6px;color:#e8e8e8;font-weight:400;letter-spacing:-0.55px;word-spacing:0.8px;white-space:pre;">1 Sep 2022</div>
<div style="position:absolute;left:738.5px;top:107.47px;font-size:9.6px;line-height:9.6px;color:#e8e8e8;font-weight:400;letter-spacing:-0.55px;word-spacing:0.8px;white-space:pre;">1 Jan 2023</div>
<div style="position:absolute;left:802.5px;top:107.47px;font-size:9.6px;line-height:9.6px;color:#e8e8e8;font-weight:400;letter-spacing:-0.55px;word-spacing:0.8px;white-space:pre;">1 May 2023</div>
<div style="position:absolute;left:866.5px;top:107.47px;font-size:9.6px;line-height:9.6px;color:#e8e8e8;font-weight:400;letter-spacing:-0.55px;word-spacing:0.8px;white-space:pre;">1 Sep 2023</div>
<div style="position:absolute;left:930.5px;top:107.47px;font-size:9.6px;line-height:9.6px;color:#e8e8e8;font-weight:400;letter-spacing:-0.55px;word-spacing:0.8px;white-space:pre;">1 Jan 2024</div>
<div style="position:absolute;left:994.5px;top:107.47px;font-size:9.6px;line-height:9.6px;color:#e8e8e8;font-weight:400;letter-spacing:-0.55px;word-spacing:0.8px;white-space:pre;">1 May 2024</div>
<div style="position:absolute;left:1058.5px;top:107.47px;font-size:9.6px;line-height:9.6px;color:#e8e8e8;font-weight:400;letter-spacing:-0.55px;word-spacing:0.8px;white-space:pre;">1 Sep 2024</div>
<div style="position:absolute;left:1122.5px;top:107.47px;font-size:9.6px;line-height:9.6px;color:#e8e8e8;font-weight:400;letter-spacing:-0.55px;word-spacing:0.8px;white-space:pre;">1 Jan 2025</div>
<div style="position:absolute;left:1186.5px;top:107.47px;font-size:9.6px;line-height:9.6px;color:#e8e8e8;font-weight:400;letter-spacing:-0.55px;word-spacing:0.8px;white-space:pre;">1 May 2025</div>
<div style="position:absolute;left:1250.5px;top:107.47px;font-size:9.6px;line-height:9.6px;color:#e8e8e8;font-weight:400;letter-spacing:-0.55px;word-spacing:0.8px;white-space:pre;">1 Sep 2025</div>
<div style="position:absolute;left:32px;top:124px;width:1334px;height:24px;background:#f0f0f0;"></div>
<div style="position:absolute;left:32px;top:124px;width:1px;height:20px;background:#a0a0a0;"></div>
<div style="position:absolute;left:48.2px;top:128.24px;font-size:12px;line-height:12px;color:#666066;font-weight:400;letter-spacing:-0.6px;white-space:pre;">EURJPY,Daily</div>
<div style="position:absolute;left:141.6px;top:128.24px;font-size:12px;line-height:12px;color:#666066;font-weight:400;letter-spacing:-0.6px;white-space:pre;">EURUSD,Daily</div>
<div style="position:absolute;left:237.5px;top:128.24px;font-size:12px;line-height:12px;color:#666066;font-weight:400;letter-spacing:-0.6px;white-space:pre;">USDJPY,Daily</div>
<div style="position:absolute;left:447px;top:128.24px;font-size:12px;line-height:12px;color:#666066;font-weight:400;letter-spacing:-0.6px;white-space:pre;">XAUUSD,Daily</div>
<div style="position:absolute;left:544.2px;top:128.24px;font-size:12px;line-height:12px;color:#666066;font-weight:400;letter-spacing:-0.6px;white-space:pre;">XAUUSD,Daily</div>
<div style="position:absolute;left:641.4px;top:128.24px;font-size:12px;line-height:12px;color:#666066;font-weight:400;letter-spacing:-0.6px;white-space:pre;">XAUUSD,Daily</div>
<div style="position:absolute;left:738.3px;top:128.24px;font-size:12px;line-height:12px;color:#666066;font-weight:400;letter-spacing:-0.6px;white-space:pre;">US500,Daily</div>
<div style="position:absolute;left:821.5px;top:128.24px;font-size:12px;line-height:12px;color:#666066;font-weight:400;letter-spacing:-0.6px;white-space:pre;">DE40,Daily</div>
<div style="position:absolute;left:898.6px;top:128.24px;font-size:12px;line-height:12px;color:#666066;font-weight:400;letter-spacing:-0.6px;white-space:pre;">XAUUSD,H1</div>
<div style="position:absolute;left:984.4px;top:128.24px;font-size:12px;line-height:12px;color:#666066;font-weight:400;letter-spacing:-0.6px;white-space:pre;">XAUUSD,Weekly</div>
<div style="position:absolute;left:1093.4px;top:128.24px;font-size:12px;line-height:12px;color:#666066;font-weight:400;letter-spacing:-0.6px;white-space:pre;">XAGUSD,Daily</div>
<div style="position:absolute;left:1215.7px;top:128.24px;font-size:12px;line-height:12px;color:#666066;font-weight:400;white-space:pre;">Market</div>
<div style="position:absolute;left:128px;top:126px;width:1px;height:14px;background:#606060;"></div>
<div style="position:absolute;left:225px;top:126px;width:1px;height:14px;background:#606060;"></div>
<div style="position:absolute;left:532px;top:126px;width:1px;height:14px;background:#606060;"></div>
<div style="position:absolute;left:629px;top:126px;width:1px;height:14px;background:#606060;"></div>
<div style="position:absolute;left:726px;top:126px;width:1px;height:14px;background:#606060;"></div>
<div style="position:absolute;left:811px;top:126px;width:1px;height:14px;background:#606060;"></div>
<div style="position:absolute;left:888px;top:126px;width:1px;height:14px;background:#606060;"></div>
<div style="position:absolute;left:973px;top:126px;width:1px;height:14px;background:#606060;"></div>
<div style="position:absolute;left:1082px;top:126px;width:1px;height:14px;background:#606060;"></div>
<div style="position:absolute;left:1179px;top:126px;width:1px;height:14px;background:#606060;"></div>
<div style="position:absolute;left:319px;top:123px;width:116px;height:19px;background:#fff;border:1px solid #000;box-sizing:border-box;box-shadow:1px 1px 0 #808080;"></div>
<div style="position:absolute;left:330.2px;top:126.84px;font-size:12px;line-height:12px;color:#000;font-weight:400;letter-spacing:-0.2px;white-space:pre;">XAUUSD,Monthly</div>
<svg style="position:absolute;left:1193px;top:126px;" width="13" height="15" viewBox="0 0 13 15"><path d="M4 5V3.3A2.5 2.5 0 0 1 9 3.3V5" stroke="#c89000" stroke-width="1.1" fill="none"/><path d="M1.8 4.8H11.2L12.2 13.5H0.8Z" fill="#fcd200" stroke="#c89000"/></svg>
<svg style="position:absolute;left:1327px;top:129px;" width="6" height="9" viewBox="0 0 6 9"><path d="M5 1.5V7.5L1 4.5Z" fill="#101010"/></svg>
<svg style="position:absolute;left:1349px;top:129px;" width="6" height="9" viewBox="0 0 6 9"><path d="M1 1.5V7.5L5 4.5Z" fill="#b0b0b0"/></svg>
<div style="position:absolute;left:32px;top:148px;width:1334px;height:1px;background:#a0a0a0;"></div>
<div style="position:absolute;left:32px;top:149px;width:16px;height:551px;background:#bccbdb;"></div>
<svg style="position:absolute;left:35px;top:155px;" width="10" height="9" viewBox="0 0 10 9"><path d="M1 0.5L9 8.5M9 0.5L1 8.5" stroke="#000" stroke-width="1.6"/></svg>
<div style="position:absolute;left:35px;top:708px;transform-origin:0 0;transform:rotate(-90deg);font-size:12px;line-height:12px;color:#000;white-space:pre;">Attrezzi</div>
<div style="position:absolute;left:48px;top:149px;width:1302px;height:551px;background:#ffffff;"></div>
<div style="position:absolute;left:188px;top:149px;width:1px;height:24px;background:#a0a0a0;"></div>
<div style="position:absolute;left:284px;top:149px;width:1px;height:24px;background:#a0a0a0;"></div>
<div style="position:absolute;left:359px;top:149px;width:1px;height:24px;background:#a0a0a0;"></div>
<div style="position:absolute;left:423px;top:149px;width:1px;height:24px;background:#a0a0a0;"></div>
<div style="position:absolute;left:530px;top:149px;width:1px;height:24px;background:#a0a0a0;"></div>
<div style="position:absolute;left:637px;top:149px;width:1px;height:24px;background:#a0a0a0;"></div>
<div style="position:absolute;left:744px;top:149px;width:1px;height:24px;background:#a0a0a0;"></div>
<div style="position:absolute;left:851px;top:149px;width:1px;height:24px;background:#a0a0a0;"></div>
<div style="position:absolute;left:991px;top:149px;width:1px;height:24px;background:#a0a0a0;"></div>
<div style="position:absolute;left:1098px;top:149px;width:1px;height:24px;background:#a0a0a0;"></div>
<div style="position:absolute;left:1205px;top:149px;width:1px;height:24px;background:#a0a0a0;"></div>
<div style="position:absolute;left:56.3px;top:154.84px;font-size:12px;line-height:12px;color:#000;font-weight:400;white-space:pre;">Ora</div>
<svg style="position:absolute;left:93px;top:158px;" width="8" height="5" viewBox="0 0 8 5"><path d="M0 4.5H7.5L3.75 0.5Z" fill="#000"/></svg>
<div style="position:absolute;right:1088px;top:154.84px;font-size:12px;line-height:12px;color:#000;font-weight:400;letter-spacing:-0.2px;white-space:pre;">Simbolo</div>
<div style="position:absolute;right:1013px;top:154.84px;font-size:12px;line-height:12px;color:#000;font-weight:400;letter-spacing:-0.7px;white-space:pre;">Ticket</div>
<div style="position:absolute;right:949px;top:154.84px;font-size:12px;line-height:12px;color:#000;font-weight:400;letter-spacing:-0.2px;white-space:pre;">Tipo</div>
<div style="position:absolute;right:844px;top:154.84px;font-size:12px;line-height:12px;color:#000;font-weight:400;letter-spacing:-0.2px;white-space:pre;">Volume</div>
<div style="position:absolute;right:735px;top:154.84px;font-size:12px;line-height:12px;color:#000;font-weight:400;letter-spacing:-0.7px;white-space:pre;">Prezzo</div>
<div style="position:absolute;right:628px;top:154.84px;font-size:12px;line-height:12px;color:#000;font-weight:400;letter-spacing:-0.2px;word-spacing:-1px;white-space:pre;">S / L</div>
<div style="position:absolute;right:521px;top:154.84px;font-size:12px;line-height:12px;color:#000;font-weight:400;letter-spacing:-0.2px;word-spacing:-1px;white-space:pre;">T / P</div>
<div style="position:absolute;right:381.70000000000005px;top:154.84px;font-size:12px;line-height:12px;color:#000;font-weight:400;letter-spacing:-0.9px;white-space:pre;">Ora</div>
<div style="position:absolute;right:274px;top:154.84px;font-size:12px;line-height:12px;color:#000;font-weight:400;letter-spacing:-0.7px;white-space:pre;">Prezzo</div>
<div style="position:absolute;right:169.5px;top:154.84px;font-size:12px;line-height:12px;color:#000;font-weight:400;letter-spacing:-0.6px;white-space:pre;">Swap</div>
<div style="position:absolute;right:23px;top:154.84px;font-size:12px;line-height:12px;color:#000;font-weight:400;letter-spacing:0.3px;white-space:pre;">Profitto</div>
<div style="position:absolute;left:50px;top:173px;width:1299px;height:19px;background:#ebebeb;"></div>
<div style="position:absolute;left:50px;top:192px;width:1299px;height:1px;background:#cacaca;"></div>
<div style="position:absolute;left:188px;top:173px;width:1px;height:20px;background:#cacaca;"></div>
<div style="position:absolute;left:284px;top:173px;width:1px;height:20px;background:#cacaca;"></div>
<div style="position:absolute;left:359px;top:173px;width:1px;height:20px;background:#cacaca;"></div>
<div style="position:absolute;left:423px;top:173px;width:1px;height:20px;background:#cacaca;"></div>
<div style="position:absolute;left:530px;top:173px;width:1px;height:20px;background:#cacaca;"></div>
<div style="position:absolute;left:637px;top:173px;width:1px;height:20px;background:#cacaca;"></div>
<div style="position:absolute;left:744px;top:173px;width:1px;height:20px;background:#cacaca;"></div>
<div style="position:absolute;left:851px;top:173px;width:1px;height:20px;background:#cacaca;"></div>
<div style="position:absolute;left:991px;top:173px;width:1px;height:20px;background:#cacaca;"></div>
<div style="position:absolute;left:1098px;top:173px;width:1px;height:20px;background:#cacaca;"></div>
<div style="position:absolute;left:1205px;top:173px;width:1px;height:20px;background:#cacaca;"></div>
<div style="position:absolute;left:638px;top:173px;width:106px;height:19px;background:#ffa0a0;"></div>
<svg style="position:absolute;left:54px;top:175px;" width="11" height="15" viewBox="0 0 11 15"><rect x="0.5" y="0.5" width="10" height="14" rx="2" fill="#fff" stroke="#e03a3a"/><path d="M4 4.5H7M4 7.5H7" stroke="#e03a3a"/></svg>
<div style="position:absolute;left:71px;top:176.84px;font-size:12px;line-height:12px;color:#000;font-weight:400;letter-spacing:-0.7px;word-spacing:1px;white-space:pre;">2025.09.09 18:16:12</div>
<div style="position:absolute;right:1086.2px;top:176.84px;font-size:12px;line-height:12px;color:#000;font-weight:400;letter-spacing:-0.3px;white-space:pre;">xauusd</div>
<div style="position:absolute;right:1010px;top:176.84px;font-size:12px;line-height:12px;color:#000;font-weight:400;letter-spacing:-0.7px;white-space:pre;">53146488488</div>
<div style="position:absolute;right:947px;top:176.84px;font-size:12px;line-height:12px;color:#000;font-weight:400;letter-spacing:-0.3px;white-space:pre;">sell</div>
<div style="position:absolute;right:840px;top:176.84px;font-size:12px;line-height:12px;color:#000;font-weight:400;letter-spacing:-0.7px;white-space:pre;">0.5</div>
<div style="position:absolute;right:732.5px;top:176.84px;font-size:12px;line-height:12px;color:#000;font-weight:400;letter-spacing:-0.7px;white-space:pre;">3630.00</div>
<div style="position:absolute;right:625.5px;top:176.84px;font-size:12px;line-height:12px;color:#000;font-weight:400;letter-spacing:-0.7px;white-space:pre;">3670.00</div>
<div style="position:absolute;right:518.5px;top:176.84px;font-size:12px;line-height:12px;color:#000;font-weight:400;letter-spacing:-0.7px;white-space:pre;">3590.00</div>
<div style="position:absolute;right:379px;top:176.84px;font-size:12px;line-height:12px;color:#000;font-weight:400;letter-spacing:-0.7px;word-spacing:1px;white-space:pre;">2025.09.15 18:47:26</div>
<div style="position:absolute;right:271.79999999999995px;top:176.84px;font-size:12px;line-height:12px;color:#000;font-weight:400;letter-spacing:-0.7px;white-space:pre;">3670.00</div>
<div style="position:absolute;right:165px;top:176.84px;font-size:12px;line-height:12px;color:#ff0000;font-weight:400;letter-spacing:-0.7px;white-space:pre;">-13.80</div>
<div style="position:absolute;right:21.5px;top:176.84px;font-size:12px;line-height:12px;color:#ff0000;font-weight:400;letter-spacing:-0.7px;word-spacing:1.2px;white-space:pre;">-2 000.00</div>
<div style="position:absolute;left:50px;top:212px;width:1299px;height:1px;background:#cacaca;"></div>
<div style="position:absolute;left:188px;top:193px;width:1px;height:20px;background:#cacaca;"></div>
<div style="position:absolute;left:284px;top:193px;width:1px;height:20px;background:#cacaca;"></div>
<div style="position:absolute;left:359px;top:193px;width:1px;height:20px;background:#cacaca;"></div>
<div style="position:absolute;left:423px;top:193px;width:1px;height:20px;background:#cacaca;"></div>
<div style="position:absolute;left:530px;top:193px;width:1px;height:20px;background:#cacaca;"></div>
<div style="position:absolute;left:637px;top:193px;width:1px;height:20px;background:#cacaca;"></div>
<div style="position:absolute;left:744px;top:193px;width:1px;height:20px;background:#cacaca;"></div>
<div style="position:absolute;left:851px;top:193px;width:1px;height:20px;background:#cacaca;"></div>
<div style="position:absolute;left:991px;top:193px;width:1px;height:20px;background:#cacaca;"></div>
<div style="position:absolute;left:1098px;top:193px;width:1px;height:20px;background:#cacaca;"></div>
<div style="position:absolute;left:1205px;top:193px;width:1px;height:20px;background:#cacaca;"></div>
<div style="position:absolute;left:745px;top:193px;width:106px;height:19px;background:#60f060;"></div>
<svg style="position:absolute;left:54px;top:195px;" width="11" height="15" viewBox="0 0 11 15"><rect x="0.5" y="0.5" width="10" height="14" rx="2" fill="#fff" stroke="#1a65b0"/><path d="M4 4.5H7M4 7.5H7" stroke="#1a65b0"/></svg>
<div style="position:absolute;left:71px;top:196.84px;font-size:12px;line-height:12px;color:#000;font-weight:400;letter-spacing:-0.7px;word-spacing:1px;white-space:pre;">2025.09.11 15:32:57</div>
<div style="position:absolute;right:1086.2px;top:196.84px;font-size:12px;line-height:12px;color:#000;font-weight:400;letter-spacing:-0.3px;white-space:pre;">xauusd</div>
<div style="position:absolute;right:1010px;top:196.84px;font-size:12px;line-height:12px;color:#000;font-weight:400;letter-spacing:-0.7px;white-space:pre;">53184801197</div>
<div style="position:absolute;right:947px;top:196.84px;font-size:12px;line-height:12px;color:#000;font-weight:400;letter-spacing:-0.3px;white-space:pre;">buy</div>
<div style="position:absolute;right:840px;top:196.84px;font-size:12px;line-height:12px;color:#000;font-weight:400;letter-spacing:-0.7px;white-space:pre;">0.5</div>
<div style="position:absolute;right:732.5px;top:196.84px;font-size:12px;line-height:12px;color:#000;font-weight:400;letter-spacing:-0.7px;white-space:pre;">3640.00</div>
<div style="position:absolute;right:625.5px;top:196.84px;font-size:12px;line-height:12px;color:#000;font-weight:400;letter-spacing:-0.7px;white-space:pre;">3600.00</div>
<div style="position:absolute;right:518.5px;top:196.84px;font-size:12px;line-height:12px;color:#000;font-weight:400;letter-spacing:-0.7px;white-space:pre;">3680.00</div>
<div style="position:absolute;right:379px;top:196.84px;font-size:12px;line-height:12px;color:#000;font-weight:400;letter-spacing:-0.7px;word-spacing:1px;white-space:pre;">2025.09.15 18:57:46</div>
<div style="position:absolute;right:271.79999999999995px;top:196.84px;font-size:12px;line-height:12px;color:#000;font-weight:400;letter-spacing:-0.7px;white-space:pre;">3680.00</div>
<div style="position:absolute;right:165px;top:196.84px;font-size:12px;line-height:12px;color:#ff0000;font-weight:400;letter-spacing:-0.7px;white-space:pre;">-12.60</div>
<div style="position:absolute;right:21.5px;top:196.84px;font-size:12px;line-height:12px;color:#0000ff;font-weight:400;letter-spacing:-0.7px;word-spacing:1.2px;white-space:pre;">2 000.00</div>
<div style="position:absolute;left:50px;top:213px;width:1299px;height:19px;background:#ebebeb;"></div>
<div style="position:absolute;left:50px;top:232px;width:1299px;height:1px;background:#cacaca;"></div>
<div style="position:absolute;left:188px;top:213px;width:1px;height:20px;background:#cacaca;"></div>
<div style="position:absolute;left:284px;top:213px;width:1px;height:20px;background:#cacaca;"></div>
<div style="position:absolute;left:359px;top:213px;width:1px;height:20px;background:#cacaca;"></div>
<div style="position:absolute;left:423px;top:213px;width:1px;height:20px;background:#cacaca;"></div>
<div style="position:absolute;left:530px;top:213px;width:1px;height:20px;background:#cacaca;"></div>
<div style="position:absolute;left:637px;top:213px;width:1px;height:20px;background:#cacaca;"></div>
<div style="position:absolute;left:744px;top:213px;width:1px;height:20px;background:#cacaca;"></div>
<div style="position:absolute;left:851px;top:213px;width:1px;height:20px;background:#cacaca;"></div>
<div style="position:absolute;left:991px;top:213px;width:1px;height:20px;background:#cacaca;"></div>
<div style="position:absolute;left:1098px;top:213px;width:1px;height:20px;background:#cacaca;"></div>
<div style="position:absolute;left:1205px;top:213px;width:1px;height:20px;background:#cacaca;"></div>
<div style="position:absolute;left:638px;top:213px;width:106px;height:19px;background:#ffa0a0;"></div>
<svg style="position:absolute;left:54px;top:215px;" width="11" height="15" viewBox="0 0 11 15"><rect x="0.5" y="0.5" width="10" height="14" rx="2" fill="#fff" stroke="#1a65b0"/><path d="M4 4.5H7M4 7.5H7" stroke="#1a65b0"/></svg>
<div style="position:absolute;left:71px;top:216.84px;font-size:12px;line-height:12px;color:#000;font-weight:400;letter-spacing:-0.7px;word-spacing:1px;white-space:pre;">2025.09.15 18:57:34</div>
<div style="position:absolute;right:1086.2px;top:216.84px;font-size:12px;line-height:12px;color:#000;font-weight:400;letter-spacing:-0.3px;white-space:pre;">xauusd</div>
<div style="position:absolute;right:1010px;top:216.84px;font-size:12px;line-height:12px;color:#000;font-weight:400;letter-spacing:-0.7px;white-space:pre;">53213887353</div>
<div style="position:absolute;right:947px;top:216.84px;font-size:12px;line-height:12px;color:#000;font-weight:400;letter-spacing:-0.3px;white-space:pre;">buy</div>
<div style="position:absolute;right:840px;top:216.84px;font-size:12px;line-height:12px;color:#000;font-weight:400;letter-spacing:-0.7px;white-space:pre;">0.5</div>
<div style="position:absolute;right:732.5px;top:216.84px;font-size:12px;line-height:12px;color:#000;font-weight:400;letter-spacing:-0.7px;white-space:pre;">3680.00</div>
<div style="position:absolute;right:625.5px;top:216.84px;font-size:12px;line-height:12px;color:#000;font-weight:400;letter-spacing:-0.7px;white-space:pre;">3640.00</div>
<div style="position:absolute;right:518.5px;top:216.84px;font-size:12px;line-height:12px;color:#000;font-weight:400;letter-spacing:-0.7px;white-space:pre;">3720.00</div>
<div style="position:absolute;right:379px;top:216.84px;font-size:12px;line-height:12px;color:#000;font-weight:400;letter-spacing:-0.7px;word-spacing:1px;white-space:pre;">2025.09.18 09:10:20</div>
<div style="position:absolute;right:271.79999999999995px;top:216.84px;font-size:12px;line-height:12px;color:#000;font-weight:400;letter-spacing:-0.7px;white-space:pre;">3640.00</div>
<div style="position:absolute;right:165px;top:216.84px;font-size:12px;line-height:12px;color:#ff0000;font-weight:400;letter-spacing:-0.7px;white-space:pre;">-31.50</div>
<div style="position:absolute;right:21.5px;top:216.84px;font-size:12px;line-height:12px;color:#ff0000;font-weight:400;letter-spacing:-0.7px;word-spacing:1.2px;white-space:pre;">-2 000.00</div>
<div style="position:absolute;left:50px;top:252px;width:1299px;height:1px;background:#cacaca;"></div>
<div style="position:absolute;left:188px;top:233px;width:1px;height:20px;background:#cacaca;"></div>
<div style="position:absolute;left:284px;top:233px;width:1px;height:20px;background:#cacaca;"></div>
<div style="position:absolute;left:359px;top:233px;width:1px;height:20px;background:#cacaca;"></div>
<div style="position:absolute;left:423px;top:233px;width:1px;height:20px;background:#cacaca;"></div>
<div style="position:absolute;left:530px;top:233px;width:1px;height:20px;background:#cacaca;"></div>
<div style="position:absolute;left:637px;top:233px;width:1px;height:20px;background:#cacaca;"></div>
<div style="position:absolute;left:744px;top:233px;width:1px;height:20px;background:#cacaca;"></div>
<div style="position:absolute;left:851px;top:233px;width:1px;height:20px;background:#cacaca;"></div>
<div style="position:absolute;left:991px;top:233px;width:1px;height:20px;background:#cacaca;"></div>
<div style="position:absolute;left:1098px;top:233px;width:1px;height:20px;background:#cacaca;"></div>
<div style="position:absolute;left:1205px;top:233px;width:1px;height:20px;background:#cacaca;"></div>
<div style="position:absolute;left:745px;top:233px;width:106px;height:19px;background:#60f060;"></div>
<svg style="position:absolute;left:54px;top:235px;" width="11" height="15" viewBox="0 0 11 15"><rect x="0.5" y="0.5" width="10" height="14" rx="2" fill="#fff" stroke="#e03a3a"/><path d="M4 4.5H7M4 7.5H7" stroke="#e03a3a"/></svg>
<div style="position:absolute;left:71px;top:236.84px;font-size:12px;line-height:12px;color:#000;font-weight:400;letter-spacing:-0.7px;word-spacing:1px;white-space:pre;">2025.09.16 18:33:48</div>
<div style="position:absolute;right:1086.2px;top:236.84px;font-size:12px;line-height:12px;color:#000;font-weight:400;letter-spacing:-0.3px;white-space:pre;">xauusd</div>
<div style="position:absolute;right:1010px;top:236.84px;font-size:12px;line-height:12px;color:#000;font-weight:400;letter-spacing:-0.7px;white-space:pre;">53227192063</div>
<div style="position:absolute;right:947px;top:236.84px;font-size:12px;line-height:12px;color:#000;font-weight:400;letter-spacing:-0.3px;white-space:pre;">sell</div>
<div style="position:absolute;right:840px;top:236.84px;font-size:12px;line-height:12px;color:#000;font-weight:400;letter-spacing:-0.7px;white-space:pre;">0.5</div>
<div style="position:absolute;right:732.5px;top:236.84px;font-size:12px;line-height:12px;color:#000;font-weight:400;letter-spacing:-0.7px;white-space:pre;">3680.00</div>
<div style="position:absolute;right:625.5px;top:236.84px;font-size:12px;line-height:12px;color:#000;font-weight:400;letter-spacing:-0.7px;white-space:pre;">3720.00</div>
<div style="position:absolute;right:518.5px;top:236.84px;font-size:12px;line-height:12px;color:#000;font-weight:400;letter-spacing:-0.7px;white-space:pre;">3640.00</div>
<div style="position:absolute;right:379px;top:236.84px;font-size:12px;line-height:12px;color:#000;font-weight:400;letter-spacing:-0.7px;word-spacing:1px;white-space:pre;">2025.09.18 09:10:24</div>
<div style="position:absolute;right:271.79999999999995px;top:236.84px;font-size:12px;line-height:12px;color:#000;font-weight:400;letter-spacing:-0.7px;white-space:pre;">3640.00</div>
<div style="position:absolute;right:165px;top:236.84px;font-size:12px;line-height:12px;color:#ff0000;font-weight:400;letter-spacing:-0.7px;white-space:pre;">-9.20</div>
<div style="position:absolute;right:21.5px;top:236.84px;font-size:12px;line-height:12px;color:#0000ff;font-weight:400;letter-spacing:-0.7px;word-spacing:1.2px;white-space:pre;">2 000.00</div>
<div style="position:absolute;left:50px;top:253px;width:1299px;height:19px;background:#ebebeb;"></div>
<div style="position:absolute;left:50px;top:272px;width:1299px;height:1px;background:#cacaca;"></div>
<div style="position:absolute;left:188px;top:253px;width:1px;height:20px;background:#cacaca;"></div>
<div style="position:absolute;left:284px;top:253px;width:1px;height:20px;background:#cacaca;"></div>
<div style="position:absolute;left:359px;top:253px;width:1px;height:20px;background:#cacaca;"></div>
<div style="position:absolute;left:423px;top:253px;width:1px;height:20px;background:#cacaca;"></div>
<div style="position:absolute;left:530px;top:253px;width:1px;height:20px;background:#cacaca;"></div>
<div style="position:absolute;left:637px;top:253px;width:1px;height:20px;background:#cacaca;"></div>
<div style="position:absolute;left:744px;top:253px;width:1px;height:20px;background:#cacaca;"></div>
<div style="position:absolute;left:851px;top:253px;width:1px;height:20px;background:#cacaca;"></div>
<div style="position:absolute;left:991px;top:253px;width:1px;height:20px;background:#cacaca;"></div>
<div style="position:absolute;left:1098px;top:253px;width:1px;height:20px;background:#cacaca;"></div>
<div style="position:absolute;left:1205px;top:253px;width:1px;height:20px;background:#cacaca;"></div>
<div style="position:absolute;left:638px;top:253px;width:106px;height:19px;background:#ffa0a0;"></div>
<svg style="position:absolute;left:54px;top:255px;" width="11" height="15" viewBox="0 0 11 15"><rect x="0.5" y="0.5" width="10" height="14" rx="2" fill="#fff" stroke="#e03a3a"/><path d="M4 4.5H7M4 7.5H7" stroke="#e03a3a"/></svg>
<div style="position:absolute;left:71px;top:256.84px;font-size:12px;line-height:12px;color:#000;font-weight:400;letter-spacing:-0.7px;word-spacing:1px;white-space:pre;">2025.09.18 09:10:20</div>
<div style="position:absolute;right:1086.2px;top:256.84px;font-size:12px;line-height:12px;color:#000;font-weight:400;letter-spacing:-0.3px;white-space:pre;">xauusd</div>
<div style="position:absolute;right:1010px;top:256.84px;font-size:12px;line-height:12px;color:#000;font-weight:400;letter-spacing:-0.7px;white-space:pre;">53239995195</div>
<div style="position:absolute;right:947px;top:256.84px;font-size:12px;line-height:12px;color:#000;font-weight:400;letter-spacing:-0.3px;white-space:pre;">sell</div>
<div style="position:absolute;right:840px;top:256.84px;font-size:12px;line-height:12px;color:#000;font-weight:400;letter-spacing:-0.7px;white-space:pre;">0.5</div>
<div style="position:absolute;right:732.5px;top:256.84px;font-size:12px;line-height:12px;color:#000;font-weight:400;letter-spacing:-0.7px;white-space:pre;">3640.00</div>
<div style="position:absolute;right:625.5px;top:256.84px;font-size:12px;line-height:12px;color:#000;font-weight:400;letter-spacing:-0.7px;white-space:pre;">3680.00</div>
<div style="position:absolute;right:518.5px;top:256.84px;font-size:12px;line-height:12px;color:#000;font-weight:400;letter-spacing:-0.7px;white-space:pre;">3600.00</div>
<div style="position:absolute;right:379px;top:256.84px;font-size:12px;line-height:12px;color:#000;font-weight:400;letter-spacing:-0.7px;word-spacing:1px;white-space:pre;">2025.09.19 21:00:42</div>
<div style="position:absolute;right:271.79999999999995px;top:256.84px;font-size:12px;line-height:12px;color:#000;font-weight:400;letter-spacing:-0.7px;white-space:pre;">3680.00</div>
<div style="position:absolute;right:165px;top:256.84px;font-size:12px;line-height:12px;color:#ff0000;font-weight:400;letter-spacing:-0.7px;white-space:pre;">-2.30</div>
<div style="position:absolute;right:21.5px;top:256.84px;font-size:12px;line-height:12px;color:#ff0000;font-weight:400;letter-spacing:-0.7px;word-spacing:1.2px;white-space:pre;">-2 000.00</div>
<div style="position:absolute;left:50px;top:292px;width:1299px;height:1px;background:#cacaca;"></div>
<div style="position:absolute;left:188px;top:273px;width:1px;height:20px;background:#cacaca;"></div>
<div style="position:absolute;left:284px;top:273px;width:1px;height:20px;background:#cacaca;"></div>
<div style="position:absolute;left:359px;top:273px;width:1px;height:20px;background:#cacaca;"></div>
<div style="position:absolute;left:423px;top:273px;width:1px;height:20px;background:#cacaca;"></div>
<div style="position:absolute;left:530px;top:273px;width:1px;height:20px;background:#cacaca;"></div>
<div style="position:absolute;left:637px;top:273px;width:1px;height:20px;background:#cacaca;"></div>
<div style="position:absolute;left:744px;top:273px;width:1px;height:20px;background:#cacaca;"></div>
<div style="position:absolute;left:851px;top:273px;width:1px;height:20px;background:#cacaca;"></div>
<div style="position:absolute;left:991px;top:273px;width:1px;height:20px;background:#cacaca;"></div>
<div style="position:absolute;left:1098px;top:273px;width:1px;height:20px;background:#cacaca;"></div>
<div style="position:absolute;left:1205px;top:273px;width:1px;height:20px;background:#cacaca;"></div>
<div style="position:absolute;left:745px;top:273px;width:106px;height:19px;background:#60f060;"></div>
<svg style="position:absolute;left:54px;top:275px;" width="11" height="15" viewBox="0 0 11 15"><rect x="0.5" y="0.5" width="10" height="14" rx="2" fill="#fff" stroke="#1a65b0"/><path d="M4 4.5H7M4 7.5H7" stroke="#1a65b0"/></svg>
<div style="position:absolute;left:71px;top:276.84px;font-size:12px;line-height:12px;color:#000;font-weight:400;letter-spacing:-0.7px;word-spacing:1px;white-space:pre;">2025.09.19 21:00:42</div>
<div style="position:absolute;right:1086.2px;top:276.84px;font-size:12px;line-height:12px;color:#000;font-weight:400;letter-spacing:-0.3px;white-space:pre;">xauusd</div>
<div style="position:absolute;right:1010px;top:276.84px;font-size:12px;line-height:12px;color:#000;font-weight:400;letter-spacing:-0.7px;white-space:pre;">53227157744</div>
<div style="position:absolute;right:947px;top:276.84px;font-size:12px;line-height:12px;color:#000;font-weight:400;letter-spacing:-0.3px;white-space:pre;">buy</div>
<div style="position:absolute;right:840px;top:276.84px;font-size:12px;line-height:12px;color:#000;font-weight:400;letter-spacing:-0.7px;white-space:pre;">0.5</div>
<div style="position:absolute;right:732.5px;top:276.84px;font-size:12px;line-height:12px;color:#000;font-weight:400;letter-spacing:-0.7px;white-space:pre;">3680.00</div>
<div style="position:absolute;right:625.5px;top:276.84px;font-size:12px;line-height:12px;color:#000;font-weight:400;letter-spacing:-0.7px;white-space:pre;">3640.00</div>
<div style="position:absolute;right:518.5px;top:276.84px;font-size:12px;line-height:12px;color:#000;font-weight:400;letter-spacing:-0.7px;white-space:pre;">3720.00</div>
<div style="position:absolute;right:379px;top:276.84px;font-size:12px;line-height:12px;color:#000;font-weight:400;letter-spacing:-0.7px;word-spacing:1px;white-space:pre;">2025.09.22 11:36:27</div>
<div style="position:absolute;right:271.79999999999995px;top:276.84px;font-size:12px;line-height:12px;color:#000;font-weight:400;letter-spacing:-0.7px;white-space:pre;">3720.00</div>
<div style="position:absolute;right:165px;top:276.84px;font-size:12px;line-height:12px;color:#ff0000;font-weight:400;letter-spacing:-0.7px;white-space:pre;">-6.30</div>
<div style="position:absolute;right:21.5px;top:276.84px;font-size:12px;line-height:12px;color:#0000ff;font-weight:400;letter-spacing:-0.7px;word-spacing:1.2px;white-space:pre;">2 000.00</div>
<div style="position:absolute;left:50px;top:293px;width:1299px;height:19px;background:#ebebeb;"></div>
<div style="position:absolute;left:50px;top:312px;width:1299px;height:1px;background:#cacaca;"></div>
<div style="position:absolute;left:188px;top:293px;width:1px;height:20px;background:#cacaca;"></div>
<div style="position:absolute;left:284px;top:293px;width:1px;height:20px;background:#cacaca;"></div>
<div style="position:absolute;left:359px;top:293px;width:1px;height:20px;background:#cacaca;"></div>
<div style="position:absolute;left:423px;top:293px;width:1px;height:20px;background:#cacaca;"></div>
<div style="position:absolute;left:530px;top:293px;width:1px;height:20px;background:#cacaca;"></div>
<div style="position:absolute;left:637px;top:293px;width:1px;height:20px;background:#cacaca;"></div>
<div style="position:absolute;left:744px;top:293px;width:1px;height:20px;background:#cacaca;"></div>
<div style="position:absolute;left:851px;top:293px;width:1px;height:20px;background:#cacaca;"></div>
<div style="position:absolute;left:991px;top:293px;width:1px;height:20px;background:#cacaca;"></div>
<div style="position:absolute;left:1098px;top:293px;width:1px;height:20px;background:#cacaca;"></div>
<div style="position:absolute;left:1205px;top:293px;width:1px;height:20px;background:#cacaca;"></div>
<div style="position:absolute;left:745px;top:293px;width:106px;height:19px;background:#60f060;"></div>
<svg style="position:absolute;left:54px;top:295px;" width="11" height="15" viewBox="0 0 11 15"><rect x="0.5" y="0.5" width="10" height="14" rx="2" fill="#fff" stroke="#1a65b0"/><path d="M4 4.5H7M4 7.5H7" stroke="#1a65b0"/></svg>
<div style="position:absolute;left:71px;top:296.84px;font-size:12px;line-height:12px;color:#000;font-weight:400;letter-spacing:-0.7px;word-spacing:1px;white-space:pre;">2025.09.22 18:28:11</div>
<div style="position:absolute;right:1086.2px;top:296.84px;font-size:12px;line-height:12px;color:#000;font-weight:400;letter-spacing:-0.3px;white-space:pre;">xauusd</div>
<div style="position:absolute;right:1010px;top:296.84px;font-size:12px;line-height:12px;color:#000;font-weight:400;letter-spacing:-0.7px;white-space:pre;">53280492076</div>
<div style="position:absolute;right:947px;top:296.84px;font-size:12px;line-height:12px;color:#000;font-weight:400;letter-spacing:-0.3px;white-space:pre;">buy</div>
<div style="position:absolute;right:840px;top:296.84px;font-size:12px;line-height:12px;color:#000;font-weight:400;letter-spacing:-0.7px;white-space:pre;">0.5</div>
<div style="position:absolute;right:732.5px;top:296.84px;font-size:12px;line-height:12px;color:#000;font-weight:400;letter-spacing:-0.7px;white-space:pre;">3730.00</div>
<div style="position:absolute;right:625.5px;top:296.84px;font-size:12px;line-height:12px;color:#000;font-weight:400;letter-spacing:-0.7px;white-space:pre;">3690.00</div>
<div style="position:absolute;right:518.5px;top:296.84px;font-size:12px;line-height:12px;color:#000;font-weight:400;letter-spacing:-0.7px;white-space:pre;">3770.00</div>
<div style="position:absolute;right:379px;top:296.84px;font-size:12px;line-height:12px;color:#000;font-weight:400;letter-spacing:-0.7px;word-spacing:1px;white-space:pre;">2025.09.23 11:44:13</div>
<div style="position:absolute;right:271.79999999999995px;top:296.84px;font-size:12px;line-height:12px;color:#000;font-weight:400;letter-spacing:-0.7px;white-space:pre;">3770.00</div>
<div style="position:absolute;right:165px;top:296.84px;font-size:12px;line-height:12px;color:#ff0000;font-weight:400;letter-spacing:-0.7px;white-space:pre;">-6.30</div>
<div style="position:absolute;right:21.5px;top:296.84px;font-size:12px;line-height:12px;color:#0000ff;font-weight:400;letter-spacing:-0.7px;word-spacing:1.2px;white-space:pre;">2 000.00</div>
<div style="position:absolute;left:50px;top:332px;width:1299px;height:1px;background:#cacaca;"></div>
<div style="position:absolute;left:188px;top:313px;width:1px;height:20px;background:#cacaca;"></div>
<div style="position:absolute;left:284px;top:313px;width:1px;height:20px;background:#cacaca;"></div>
<div style="position:absolute;left:359px;top:313px;width:1px;height:20px;background:#cacaca;"></div>
<div style="position:absolute;left:423px;top:313px;width:1px;height:20px;background:#cacaca;"></div>
<div style="position:absolute;left:530px;top:313px;width:1px;height:20px;background:#cacaca;"></div>
<div style="position:absolute;left:637px;top:313px;width:1px;height:20px;background:#cacaca;"></div>
<div style="position:absolute;left:744px;top:313px;width:1px;height:20px;background:#cacaca;"></div>
<div style="position:absolute;left:851px;top:313px;width:1px;height:20px;background:#cacaca;"></div>
<div style="position:absolute;left:991px;top:313px;width:1px;height:20px;background:#cacaca;"></div>
<div style="position:absolute;left:1098px;top:313px;width:1px;height:20px;background:#cacaca;"></div>
<div style="position:absolute;left:1205px;top:313px;width:1px;height:20px;background:#cacaca;"></div>
<div style="position:absolute;left:638px;top:313px;width:106px;height:19px;background:#ffa0a0;"></div>
<svg style="position:absolute;left:54px;top:315px;" width="11" height="15" viewBox="0 0 11 15"><rect x="0.5" y="0.5" width="10" height="14" rx="2" fill="#fff" stroke="#e03a3a"/><path d="M4 4.5H7M4 7.5H7" stroke="#e03a3a"/></svg>
<div style="position:absolute;left:71px;top:316.84px;font-size:12px;line-height:12px;color:#000;font-weight:400;letter-spacing:-0.7px;word-spacing:1px;white-space:pre;">2025.09.24 19:03:11</div>
<div style="position:absolute;right:1086.2px;top:316.84px;font-size:12px;line-height:12px;color:#000;font-weight:400;letter-spacing:-0.3px;white-space:pre;">xauusd</div>
<div style="position:absolute;right:1010px;top:316.84px;font-size:12px;line-height:12px;color:#000;font-weight:400;letter-spacing:-0.7px;white-space:pre;">53293493893</div>
<div style="position:absolute;right:947px;top:316.84px;font-size:12px;line-height:12px;color:#000;font-weight:400;letter-spacing:-0.3px;white-space:pre;">sell</div>
<div style="position:absolute;right:840px;top:316.84px;font-size:12px;line-height:12px;color:#000;font-weight:400;letter-spacing:-0.7px;white-space:pre;">0.5</div>
<div style="position:absolute;right:732.5px;top:316.84px;font-size:12px;line-height:12px;color:#000;font-weight:400;letter-spacing:-0.7px;white-space:pre;">3740.00</div>
<div style="position:absolute;right:625.5px;top:316.84px;font-size:12px;line-height:12px;color:#000;font-weight:400;letter-spacing:-0.7px;white-space:pre;">3780.00</div>
<div style="position:absolute;right:518.5px;top:316.84px;font-size:12px;line-height:12px;color:#000;font-weight:400;letter-spacing:-0.7px;white-space:pre;">3700.00</div>
<div style="position:absolute;right:379px;top:316.84px;font-size:12px;line-height:12px;color:#000;font-weight:400;letter-spacing:-0.7px;word-spacing:1px;white-space:pre;">2025.09.26 17:23:11</div>
<div style="position:absolute;right:271.79999999999995px;top:316.84px;font-size:12px;line-height:12px;color:#000;font-weight:400;letter-spacing:-0.7px;white-space:pre;">3780.00</div>
<div style="position:absolute;right:165px;top:316.84px;font-size:12px;line-height:12px;color:#ff0000;font-weight:400;letter-spacing:-0.7px;white-space:pre;">-9.20</div>
<div style="position:absolute;right:21.5px;top:316.84px;font-size:12px;line-height:12px;color:#ff0000;font-weight:400;letter-spacing:-0.7px;word-spacing:1.2px;white-space:pre;">-2 000.00</div>
<div style="position:absolute;left:50px;top:333px;width:1299px;height:19px;background:#ebebeb;"></div>
<div style="position:absolute;left:50px;top:352px;width:1299px;height:1px;background:#cacaca;"></div>
<div style="position:absolute;left:188px;top:333px;width:1px;height:20px;background:#cacaca;"></div>
<div style="position:absolute;left:284px;top:333px;width:1px;height:20px;background:#cacaca;"></div>
<div style="position:absolute;left:359px;top:333px;width:1px;height:20px;background:#cacaca;"></div>
<div style="position:absolute;left:423px;top:333px;width:1px;height:20px;background:#cacaca;"></div>
<div style="position:absolute;left:530px;top:333px;width:1px;height:20px;background:#cacaca;"></div>
<div style="position:absolute;left:637px;top:333px;width:1px;height:20px;background:#cacaca;"></div>
<div style="position:absolute;left:744px;top:333px;width:1px;height:20px;background:#cacaca;"></div>
<div style="position:absolute;left:851px;top:333px;width:1px;height:20px;background:#cacaca;"></div>
<div style="position:absolute;left:991px;top:333px;width:1px;height:20px;background:#cacaca;"></div>
<div style="position:absolute;left:1098px;top:333px;width:1px;height:20px;background:#cacaca;"></div>
<div style="position:absolute;left:1205px;top:333px;width:1px;height:20px;background:#cacaca;"></div>
<div style="position:absolute;left:745px;top:333px;width:106px;height:19px;background:#60f060;"></div>
<svg style="position:absolute;left:54px;top:335px;" width="11" height="15" viewBox="0 0 11 15"><rect x="0.5" y="0.5" width="10" height="14" rx="2" fill="#fff" stroke="#1a65b0"/><path d="M4 4.5H7M4 7.5H7" stroke="#1a65b0"/></svg>
<div style="position:absolute;left:71px;top:336.84px;font-size:12px;line-height:12px;color:#000;font-weight:400;letter-spacing:-0.7px;word-spacing:1px;white-space:pre;">2025.09.25 11:16:39</div>
<div style="position:absolute;right:1086.2px;top:336.84px;font-size:12px;line-height:12px;color:#000;font-weight:400;letter-spacing:-0.3px;white-space:pre;">xauusd</div>
<div style="position:absolute;right:1010px;top:336.84px;font-size:12px;line-height:12px;color:#000;font-weight:400;letter-spacing:-0.7px;white-space:pre;">53293465665</div>
<div style="position:absolute;right:947px;top:336.84px;font-size:12px;line-height:12px;color:#000;font-weight:400;letter-spacing:-0.3px;white-space:pre;">buy</div>
<div style="position:absolute;right:840px;top:336.84px;font-size:12px;line-height:12px;color:#000;font-weight:400;letter-spacing:-0.7px;white-space:pre;">0.5</div>
<div style="position:absolute;right:732.5px;top:336.84px;font-size:12px;line-height:12px;color:#000;font-weight:400;letter-spacing:-0.7px;white-space:pre;">3760.00</div>
<div style="position:absolute;right:625.5px;top:336.84px;font-size:12px;line-height:12px;color:#000;font-weight:400;letter-spacing:-0.7px;white-space:pre;">3720.00</div>
<div style="position:absolute;right:518.5px;top:336.84px;font-size:12px;line-height:12px;color:#000;font-weight:400;letter-spacing:-0.7px;white-space:pre;">3800.00</div>
<div style="position:absolute;right:379px;top:336.84px;font-size:12px;line-height:12px;color:#000;font-weight:400;letter-spacing:-0.7px;word-spacing:1px;white-space:pre;">2025.09.29 07:30:12</div>
<div style="position:absolute;right:271.79999999999995px;top:336.84px;font-size:12px;line-height:12px;color:#000;font-weight:400;letter-spacing:-0.7px;white-space:pre;">3800.00</div>
<div style="position:absolute;right:165px;top:336.84px;font-size:12px;line-height:12px;color:#ff0000;font-weight:400;letter-spacing:-0.7px;white-space:pre;">-12.60</div>
<div style="position:absolute;right:21.5px;top:336.84px;font-size:12px;line-height:12px;color:#0000ff;font-weight:400;letter-spacing:-0.7px;word-spacing:1.2px;white-space:pre;">2 000.00</div>
<div style="position:absolute;left:50px;top:372px;width:1299px;height:1px;background:#cacaca;"></div>
<div style="position:absolute;left:188px;top:353px;width:1px;height:20px;background:#cacaca;"></div>
<div style="position:absolute;left:284px;top:353px;width:1px;height:20px;background:#cacaca;"></div>
<div style="position:absolute;left:359px;top:353px;width:1px;height:20px;background:#cacaca;"></div>
<div style="position:absolute;left:423px;top:353px;width:1px;height:20px;background:#cacaca;"></div>
<div style="position:absolute;left:530px;top:353px;width:1px;height:20px;background:#cacaca;"></div>
<div style="position:absolute;left:637px;top:353px;width:1px;height:20px;background:#cacaca;"></div>
<div style="position:absolute;left:744px;top:353px;width:1px;height:20px;background:#cacaca;"></div>
<div style="position:absolute;left:851px;top:353px;width:1px;height:20px;background:#cacaca;"></div>
<div style="position:absolute;left:991px;top:353px;width:1px;height:20px;background:#cacaca;"></div>
<div style="position:absolute;left:1098px;top:353px;width:1px;height:20px;background:#cacaca;"></div>
<div style="position:absolute;left:1205px;top:353px;width:1px;height:20px;background:#cacaca;"></div>
<div style="position:absolute;left:745px;top:353px;width:106px;height:19px;background:#60f060;"></div>
<svg style="position:absolute;left:54px;top:355px;" width="11" height="15" viewBox="0 0 11 15"><rect x="0.5" y="0.5" width="10" height="14" rx="2" fill="#fff" stroke="#1a65b0"/><path d="M4 4.5H7M4 7.5H7" stroke="#1a65b0"/></svg>
<div style="position:absolute;left:71px;top:356.84px;font-size:12px;line-height:12px;color:#000;font-weight:400;letter-spacing:-0.7px;word-spacing:1px;white-space:pre;">2025.09.29 07:30:06</div>
<div style="position:absolute;right:1086.2px;top:356.84px;font-size:12px;line-height:12px;color:#000;font-weight:400;letter-spacing:-0.3px;white-space:pre;">xauusd</div>
<div style="position:absolute;right:1010px;top:356.84px;font-size:12px;line-height:12px;color:#000;font-weight:400;letter-spacing:-0.7px;white-space:pre;">53432581920</div>
<div style="position:absolute;right:947px;top:356.84px;font-size:12px;line-height:12px;color:#000;font-weight:400;letter-spacing:-0.3px;white-space:pre;">buy</div>
<div style="position:absolute;right:840px;top:356.84px;font-size:12px;line-height:12px;color:#000;font-weight:400;letter-spacing:-0.7px;white-space:pre;">0.5</div>
<div style="position:absolute;right:732.5px;top:356.84px;font-size:12px;line-height:12px;color:#000;font-weight:400;letter-spacing:-0.7px;white-space:pre;">3800.00</div>
<div style="position:absolute;right:625.5px;top:356.84px;font-size:12px;line-height:12px;color:#000;font-weight:400;letter-spacing:-0.7px;white-space:pre;">3760.00</div>
<div style="position:absolute;right:518.5px;top:356.84px;font-size:12px;line-height:12px;color:#000;font-weight:400;letter-spacing:-0.7px;white-space:pre;">3840.00</div>
<div style="position:absolute;right:379px;top:356.84px;font-size:12px;line-height:12px;color:#000;font-weight:400;letter-spacing:-0.7px;word-spacing:1px;white-space:pre;">2025.09.30 03:25:12</div>
<div style="position:absolute;right:271.79999999999995px;top:356.84px;font-size:12px;line-height:12px;color:#000;font-weight:400;letter-spacing:-0.7px;white-space:pre;">3840.00</div>
<div style="position:absolute;right:165px;top:356.84px;font-size:12px;line-height:12px;color:#ff0000;font-weight:400;letter-spacing:-0.7px;white-space:pre;">-6.30</div>
<div style="position:absolute;right:21.5px;top:356.84px;font-size:12px;line-height:12px;color:#0000ff;font-weight:400;letter-spacing:-0.7px;word-spacing:1.2px;white-space:pre;">2 000.00</div>
<div style="position:absolute;left:50px;top:373px;width:1299px;height:19px;background:#ebebeb;"></div>
<div style="position:absolute;left:50px;top:392px;width:1299px;height:1px;background:#cacaca;"></div>
<div style="position:absolute;left:188px;top:373px;width:1px;height:20px;background:#cacaca;"></div>
<div style="position:absolute;left:284px;top:373px;width:1px;height:20px;background:#cacaca;"></div>
<div style="position:absolute;left:359px;top:373px;width:1px;height:20px;background:#cacaca;"></div>
<div style="position:absolute;left:423px;top:373px;width:1px;height:20px;background:#cacaca;"></div>
<div style="position:absolute;left:530px;top:373px;width:1px;height:20px;background:#cacaca;"></div>
<div style="position:absolute;left:637px;top:373px;width:1px;height:20px;background:#cacaca;"></div>
<div style="position:absolute;left:744px;top:373px;width:1px;height:20px;background:#cacaca;"></div>
<div style="position:absolute;left:851px;top:373px;width:1px;height:20px;background:#cacaca;"></div>
<div style="position:absolute;left:991px;top:373px;width:1px;height:20px;background:#cacaca;"></div>
<div style="position:absolute;left:1098px;top:373px;width:1px;height:20px;background:#cacaca;"></div>
<div style="position:absolute;left:1205px;top:373px;width:1px;height:20px;background:#cacaca;"></div>
<div style="position:absolute;left:638px;top:373px;width:106px;height:19px;background:#ffa0a0;"></div>
<svg style="position:absolute;left:54px;top:375px;" width="11" height="15" viewBox="0 0 11 15"><rect x="0.5" y="0.5" width="10" height="14" rx="2" fill="#fff" stroke="#1a65b0"/><path d="M4 4.5H7M4 7.5H7" stroke="#1a65b0"/></svg>
<div style="position:absolute;left:71px;top:376.84px;font-size:12px;line-height:12px;color:#000;font-weight:400;letter-spacing:-0.7px;word-spacing:1px;white-space:pre;">2025.09.30 03:25:09</div>
<div style="position:absolute;right:1086.2px;top:376.84px;font-size:12px;line-height:12px;color:#000;font-weight:400;letter-spacing:-0.3px;white-space:pre;">xauusd</div>
<div style="position:absolute;right:1010px;top:376.84px;font-size:12px;line-height:12px;color:#000;font-weight:400;letter-spacing:-0.7px;white-space:pre;">53445757880</div>
<div style="position:absolute;right:947px;top:376.84px;font-size:12px;line-height:12px;color:#000;font-weight:400;letter-spacing:-0.3px;white-space:pre;">buy</div>
<div style="position:absolute;right:840px;top:376.84px;font-size:12px;line-height:12px;color:#000;font-weight:400;letter-spacing:-0.7px;white-space:pre;">0.5</div>
<div style="position:absolute;right:732.5px;top:376.84px;font-size:12px;line-height:12px;color:#000;font-weight:400;letter-spacing:-0.7px;white-space:pre;">3840.00</div>
<div style="position:absolute;right:625.5px;top:376.84px;font-size:12px;line-height:12px;color:#000;font-weight:400;letter-spacing:-0.7px;white-space:pre;">3800.00</div>
<div style="position:absolute;right:518.5px;top:376.84px;font-size:12px;line-height:12px;color:#000;font-weight:400;letter-spacing:-0.7px;white-space:pre;">3880.00</div>
<div style="position:absolute;right:379px;top:376.84px;font-size:12px;line-height:12px;color:#000;font-weight:400;letter-spacing:-0.7px;word-spacing:1px;white-space:pre;">2025.09.30 12:12:51</div>
<div style="position:absolute;right:271.79999999999995px;top:376.84px;font-size:12px;line-height:12px;color:#000;font-weight:400;letter-spacing:-0.7px;white-space:pre;">3800.00</div>
<div style="position:absolute;right:21.5px;top:376.84px;font-size:12px;line-height:12px;color:#ff0000;font-weight:400;letter-spacing:-0.7px;word-spacing:1.2px;white-space:pre;">-2 000.00</div>
<div style="position:absolute;left:50px;top:412px;width:1299px;height:1px;background:#cacaca;"></div>
<div style="position:absolute;left:188px;top:393px;width:1px;height:20px;background:#cacaca;"></div>
<div style="position:absolute;left:284px;top:393px;width:1px;height:20px;background:#cacaca;"></div>
<div style="position:absolute;left:359px;top:393px;width:1px;height:20px;background:#cacaca;"></div>
<div style="position:absolute;left:423px;top:393px;width:1px;height:20px;background:#cacaca;"></div>
<div style="position:absolute;left:530px;top:393px;width:1px;height:20px;background:#cacaca;"></div>
<div style="position:absolute;left:637px;top:393px;width:1px;height:20px;background:#cacaca;"></div>
<div style="position:absolute;left:744px;top:393px;width:1px;height:20px;background:#cacaca;"></div>
<div style="position:absolute;left:851px;top:393px;width:1px;height:20px;background:#cacaca;"></div>
<div style="position:absolute;left:991px;top:393px;width:1px;height:20px;background:#cacaca;"></div>
<div style="position:absolute;left:1098px;top:393px;width:1px;height:20px;background:#cacaca;"></div>
<div style="position:absolute;left:1205px;top:393px;width:1px;height:20px;background:#cacaca;"></div>
<div style="position:absolute;left:745px;top:393px;width:106px;height:19px;background:#60f060;"></div>
<svg style="position:absolute;left:54px;top:395px;" width="11" height="15" viewBox="0 0 11 15"><rect x="0.5" y="0.5" width="10" height="14" rx="2" fill="#fff" stroke="#1a65b0"/><path d="M4 4.5H7M4 7.5H7" stroke="#1a65b0"/></svg>
<div style="position:absolute;left:71px;top:396.84px;font-size:12px;line-height:12px;color:#000;font-weight:400;letter-spacing:-0.7px;word-spacing:1px;white-space:pre;">2025.09.30 15:53:55</div>
<div style="position:absolute;right:1086.2px;top:396.84px;font-size:12px;line-height:12px;color:#000;font-weight:400;letter-spacing:-0.3px;white-space:pre;">xauusd</div>
<div style="position:absolute;right:1010px;top:396.84px;font-size:12px;line-height:12px;color:#000;font-weight:400;letter-spacing:-0.7px;white-space:pre;">53460469536</div>
<div style="position:absolute;right:947px;top:396.84px;font-size:12px;line-height:12px;color:#000;font-weight:400;letter-spacing:-0.3px;white-space:pre;">buy</div>
<div style="position:absolute;right:840px;top:396.84px;font-size:12px;line-height:12px;color:#000;font-weight:400;letter-spacing:-0.7px;white-space:pre;">0.5</div>
<div style="position:absolute;right:732.5px;top:396.84px;font-size:12px;line-height:12px;color:#000;font-weight:400;letter-spacing:-0.7px;white-space:pre;">3820.00</div>
<div style="position:absolute;right:625.5px;top:396.84px;font-size:12px;line-height:12px;color:#000;font-weight:400;letter-spacing:-0.7px;white-space:pre;">3780.00</div>
<div style="position:absolute;right:518.5px;top:396.84px;font-size:12px;line-height:12px;color:#000;font-weight:400;letter-spacing:-0.7px;white-space:pre;">3860.00</div>
<div style="position:absolute;right:379px;top:396.84px;font-size:12px;line-height:12px;color:#000;font-weight:400;letter-spacing:-0.7px;word-spacing:1px;white-space:pre;">2025.09.30 22:55:33</div>
<div style="position:absolute;right:271.79999999999995px;top:396.84px;font-size:12px;line-height:12px;color:#000;font-weight:400;letter-spacing:-0.7px;white-space:pre;">3860.00</div>
<div style="position:absolute;right:21.5px;top:396.84px;font-size:12px;line-height:12px;color:#0000ff;font-weight:400;letter-spacing:-0.7px;word-spacing:1.2px;white-space:pre;">2 000.00</div>
<div style="position:absolute;left:50px;top:413px;width:1299px;height:19px;background:#ebebeb;"></div>
<div style="position:absolute;left:50px;top:432px;width:1299px;height:1px;background:#cacaca;"></div>
<div style="position:absolute;left:188px;top:413px;width:1px;height:20px;background:#cacaca;"></div>
<div style="position:absolute;left:284px;top:413px;width:1px;height:20px;background:#cacaca;"></div>
<div style="position:absolute;left:359px;top:413px;width:1px;height:20px;background:#cacaca;"></div>
<div style="position:absolute;left:423px;top:413px;width:1px;height:20px;background:#cacaca;"></div>
<div style="position:absolute;left:530px;top:413px;width:1px;height:20px;background:#cacaca;"></div>
<div style="position:absolute;left:637px;top:413px;width:1px;height:20px;background:#cacaca;"></div>
<div style="position:absolute;left:744px;top:413px;width:1px;height:20px;background:#cacaca;"></div>
<div style="position:absolute;left:851px;top:413px;width:1px;height:20px;background:#cacaca;"></div>
<div style="position:absolute;left:991px;top:413px;width:1px;height:20px;background:#cacaca;"></div>
<div style="position:absolute;left:1098px;top:413px;width:1px;height:20px;background:#cacaca;"></div>
<div style="position:absolute;left:1205px;top:413px;width:1px;height:20px;background:#cacaca;"></div>
<div style="position:absolute;left:638px;top:413px;width:106px;height:19px;background:#ffa0a0;"></div>
<svg style="position:absolute;left:54px;top:415px;" width="11" height="15" viewBox="0 0 11 15"><rect x="0.5" y="0.5" width="10" height="14" rx="2" fill="#fff" stroke="#1a65b0"/><path d="M4 4.5H7M4 7.5H7" stroke="#1a65b0"/></svg>
<div style="position:absolute;left:71px;top:416.84px;font-size:12px;line-height:12px;color:#000;font-weight:400;letter-spacing:-0.7px;word-spacing:1px;white-space:pre;">2025.10.02 15:06:25</div>
<div style="position:absolute;right:1086.2px;top:416.84px;font-size:12px;line-height:12px;color:#000;font-weight:400;letter-spacing:-0.3px;white-space:pre;">xauusd</div>
<div style="position:absolute;right:1010px;top:416.84px;font-size:12px;line-height:12px;color:#000;font-weight:400;letter-spacing:-0.7px;white-space:pre;">53473476535</div>
<div style="position:absolute;right:947px;top:416.84px;font-size:12px;line-height:12px;color:#000;font-weight:400;letter-spacing:-0.3px;white-space:pre;">buy</div>
<div style="position:absolute;right:840px;top:416.84px;font-size:12px;line-height:12px;color:#000;font-weight:400;letter-spacing:-0.7px;white-space:pre;">0.5</div>
<div style="position:absolute;right:732.5px;top:416.84px;font-size:12px;line-height:12px;color:#000;font-weight:400;letter-spacing:-0.7px;white-space:pre;">3890.00</div>
<div style="position:absolute;right:625.5px;top:416.84px;font-size:12px;line-height:12px;color:#000;font-weight:400;letter-spacing:-0.7px;white-space:pre;">3850.00</div>
<div style="position:absolute;right:518.5px;top:416.84px;font-size:12px;line-height:12px;color:#000;font-weight:400;letter-spacing:-0.7px;white-space:pre;">3930.00</div>
<div style="position:absolute;right:379px;top:416.84px;font-size:12px;line-height:12px;color:#000;font-weight:400;letter-spacing:-0.7px;word-spacing:1px;white-space:pre;">2025.10.02 17:37:15</div>
<div style="position:absolute;right:271.79999999999995px;top:416.84px;font-size:12px;line-height:12px;color:#000;font-weight:400;letter-spacing:-0.7px;white-space:pre;">3850.00</div>
<div style="position:absolute;right:21.5px;top:416.84px;font-size:12px;line-height:12px;color:#ff0000;font-weight:400;letter-spacing:-0.7px;word-spacing:1.2px;white-space:pre;">-2 000.00</div>
<div style="position:absolute;left:50px;top:452px;width:1299px;height:1px;background:#cacaca;"></div>
<div style="position:absolute;left:188px;top:433px;width:1px;height:20px;background:#cacaca;"></div>
<div style="position:absolute;left:284px;top:433px;width:1px;height:20px;background:#cacaca;"></div>
<div style="position:absolute;left:359px;top:433px;width:1px;height:20px;background:#cacaca;"></div>
<div style="position:absolute;left:423px;top:433px;width:1px;height:20px;background:#cacaca;"></div>
<div style="position:absolute;left:530px;top:433px;width:1px;height:20px;background:#cacaca;"></div>
<div style="position:absolute;left:637px;top:433px;width:1px;height:20px;background:#cacaca;"></div>
<div style="position:absolute;left:744px;top:433px;width:1px;height:20px;background:#cacaca;"></div>
<div style="position:absolute;left:851px;top:433px;width:1px;height:20px;background:#cacaca;"></div>
<div style="position:absolute;left:991px;top:433px;width:1px;height:20px;background:#cacaca;"></div>
<div style="position:absolute;left:1098px;top:433px;width:1px;height:20px;background:#cacaca;"></div>
<div style="position:absolute;left:1205px;top:433px;width:1px;height:20px;background:#cacaca;"></div>
<div style="position:absolute;left:638px;top:433px;width:106px;height:19px;background:#ffa0a0;"></div>
<svg style="position:absolute;left:54px;top:435px;" width="11" height="15" viewBox="0 0 11 15"><rect x="0.5" y="0.5" width="10" height="14" rx="2" fill="#fff" stroke="#e03a3a"/><path d="M4 4.5H7M4 7.5H7" stroke="#e03a3a"/></svg>
<div style="position:absolute;left:71px;top:436.84px;font-size:12px;line-height:12px;color:#000;font-weight:400;letter-spacing:-0.7px;word-spacing:1px;white-space:pre;">2025.10.02 17:47:21</div>
<div style="position:absolute;right:1086.2px;top:436.84px;font-size:12px;line-height:12px;color:#000;font-weight:400;letter-spacing:-0.3px;white-space:pre;">xauusd</div>
<div style="position:absolute;right:1010px;top:436.84px;font-size:12px;line-height:12px;color:#000;font-weight:400;letter-spacing:-0.7px;white-space:pre;">53460516448</div>
<div style="position:absolute;right:947px;top:436.84px;font-size:12px;line-height:12px;color:#000;font-weight:400;letter-spacing:-0.3px;white-space:pre;">sell</div>
<div style="position:absolute;right:840px;top:436.84px;font-size:12px;line-height:12px;color:#000;font-weight:400;letter-spacing:-0.7px;white-space:pre;">0.5</div>
<div style="position:absolute;right:732.5px;top:436.84px;font-size:12px;line-height:12px;color:#000;font-weight:400;letter-spacing:-0.7px;white-space:pre;">3830.00</div>
<div style="position:absolute;right:625.5px;top:436.84px;font-size:12px;line-height:12px;color:#000;font-weight:400;letter-spacing:-0.7px;white-space:pre;">3870.00</div>
<div style="position:absolute;right:518.5px;top:436.84px;font-size:12px;line-height:12px;color:#000;font-weight:400;letter-spacing:-0.7px;white-space:pre;">3790.00</div>
<div style="position:absolute;right:379px;top:436.84px;font-size:12px;line-height:12px;color:#000;font-weight:400;letter-spacing:-0.7px;word-spacing:1px;white-space:pre;">2025.10.03 15:41:25</div>
<div style="position:absolute;right:271.79999999999995px;top:436.84px;font-size:12px;line-height:12px;color:#000;font-weight:400;letter-spacing:-0.7px;white-space:pre;">3870.00</div>
<div style="position:absolute;right:165px;top:436.84px;font-size:12px;line-height:12px;color:#ff0000;font-weight:400;letter-spacing:-0.7px;white-space:pre;">-2.30</div>
<div style="position:absolute;right:21.5px;top:436.84px;font-size:12px;line-height:12px;color:#ff0000;font-weight:400;letter-spacing:-0.7px;word-spacing:1.2px;white-space:pre;">-2 000.00</div>
<div style="position:absolute;left:50px;top:453px;width:1299px;height:19px;background:#ebebeb;"></div>
<div style="position:absolute;left:50px;top:472px;width:1299px;height:1px;background:#cacaca;"></div>
<div style="position:absolute;left:188px;top:453px;width:1px;height:20px;background:#cacaca;"></div>
<div style="position:absolute;left:284px;top:453px;width:1px;height:20px;background:#cacaca;"></div>
<div style="position:absolute;left:359px;top:453px;width:1px;height:20px;background:#cacaca;"></div>
<div style="position:absolute;left:423px;top:453px;width:1px;height:20px;background:#cacaca;"></div>
<div style="position:absolute;left:530px;top:453px;width:1px;height:20px;background:#cacaca;"></div>
<div style="position:absolute;left:637px;top:453px;width:1px;height:20px;background:#cacaca;"></div>
<div style="position:absolute;left:744px;top:453px;width:1px;height:20px;background:#cacaca;"></div>
<div style="position:absolute;left:851px;top:453px;width:1px;height:20px;background:#cacaca;"></div>
<div style="position:absolute;left:991px;top:453px;width:1px;height:20px;background:#cacaca;"></div>
<div style="position:absolute;left:1098px;top:453px;width:1px;height:20px;background:#cacaca;"></div>
<div style="position:absolute;left:1205px;top:453px;width:1px;height:20px;background:#cacaca;"></div>
<div style="position:absolute;left:745px;top:453px;width:106px;height:19px;background:#60f060;"></div>
<svg style="position:absolute;left:54px;top:455px;" width="11" height="15" viewBox="0 0 11 15"><rect x="0.5" y="0.5" width="10" height="14" rx="2" fill="#fff" stroke="#1a65b0"/><path d="M4 4.5H7M4 7.5H7" stroke="#1a65b0"/></svg>
<div style="position:absolute;left:71px;top:456.84px;font-size:12px;line-height:12px;color:#000;font-weight:400;letter-spacing:-0.7px;word-spacing:1px;white-space:pre;">2025.10.03 15:41:26</div>
<div style="position:absolute;right:1086.2px;top:456.84px;font-size:12px;line-height:12px;color:#000;font-weight:400;letter-spacing:-0.3px;white-space:pre;">xauusd</div>
<div style="position:absolute;right:1010px;top:456.84px;font-size:12px;line-height:12px;color:#000;font-weight:400;letter-spacing:-0.7px;white-space:pre;">53502942168</div>
<div style="position:absolute;right:947px;top:456.84px;font-size:12px;line-height:12px;color:#000;font-weight:400;letter-spacing:-0.3px;white-space:pre;">buy</div>
<div style="position:absolute;right:840px;top:456.84px;font-size:12px;line-height:12px;color:#000;font-weight:400;letter-spacing:-0.7px;white-space:pre;">0.5</div>
<div style="position:absolute;right:732.5px;top:456.84px;font-size:12px;line-height:12px;color:#000;font-weight:400;letter-spacing:-0.7px;white-space:pre;">3870.00</div>
<div style="position:absolute;right:625.5px;top:456.84px;font-size:12px;line-height:12px;color:#000;font-weight:400;letter-spacing:-0.7px;white-space:pre;">3810.00</div>
<div style="position:absolute;right:518.5px;top:456.84px;font-size:12px;line-height:12px;color:#000;font-weight:400;letter-spacing:-0.7px;white-space:pre;">3930.00</div>
<div style="position:absolute;right:379px;top:456.84px;font-size:12px;line-height:12px;color:#000;font-weight:400;letter-spacing:-0.7px;word-spacing:1px;white-space:pre;">2025.10.06 06:46:53</div>
<div style="position:absolute;right:271.79999999999995px;top:456.84px;font-size:12px;line-height:12px;color:#000;font-weight:400;letter-spacing:-0.7px;white-space:pre;">3930.00</div>
<div style="position:absolute;right:165px;top:456.84px;font-size:12px;line-height:12px;color:#ff0000;font-weight:400;letter-spacing:-0.7px;white-space:pre;">-6.30</div>
<div style="position:absolute;right:21.5px;top:456.84px;font-size:12px;line-height:12px;color:#0000ff;font-weight:400;letter-spacing:-0.7px;word-spacing:1.2px;white-space:pre;">3 000.00</div>
<div style="position:absolute;left:50px;top:492px;width:1299px;height:1px;background:#cacaca;"></div>
<div style="position:absolute;left:188px;top:473px;width:1px;height:20px;background:#cacaca;"></div>
<div style="position:absolute;left:284px;top:473px;width:1px;height:20px;background:#cacaca;"></div>
<div style="position:absolute;left:359px;top:473px;width:1px;height:20px;background:#cacaca;"></div>
<div style="position:absolute;left:423px;top:473px;width:1px;height:20px;background:#cacaca;"></div>
<div style="position:absolute;left:530px;top:473px;width:1px;height:20px;background:#cacaca;"></div>
<div style="position:absolute;left:637px;top:473px;width:1px;height:20px;background:#cacaca;"></div>
<div style="position:absolute;left:744px;top:473px;width:1px;height:20px;background:#cacaca;"></div>
<div style="position:absolute;left:851px;top:473px;width:1px;height:20px;background:#cacaca;"></div>
<div style="position:absolute;left:991px;top:473px;width:1px;height:20px;background:#cacaca;"></div>
<div style="position:absolute;left:1098px;top:473px;width:1px;height:20px;background:#cacaca;"></div>
<div style="position:absolute;left:1205px;top:473px;width:1px;height:20px;background:#cacaca;"></div>
<div style="position:absolute;left:745px;top:473px;width:106px;height:19px;background:#60f060;"></div>
<svg style="position:absolute;left:54px;top:475px;" width="11" height="15" viewBox="0 0 11 15"><rect x="0.5" y="0.5" width="10" height="14" rx="2" fill="#fff" stroke="#1a65b0"/><path d="M4 4.5H7M4 7.5H7" stroke="#1a65b0"/></svg>
<div style="position:absolute;left:71px;top:476.84px;font-size:12px;line-height:12px;color:#000;font-weight:400;letter-spacing:-0.7px;word-spacing:1px;white-space:pre;">2025.10.06 11:48:51</div>
<div style="position:absolute;right:1086.2px;top:476.84px;font-size:12px;line-height:12px;color:#000;font-weight:400;letter-spacing:-0.3px;white-space:pre;">xauusd</div>
<div style="position:absolute;right:1010px;top:476.84px;font-size:12px;line-height:12px;color:#000;font-weight:400;letter-spacing:-0.7px;white-space:pre;">53516699494</div>
<div style="position:absolute;right:947px;top:476.84px;font-size:12px;line-height:12px;color:#000;font-weight:400;letter-spacing:-0.3px;white-space:pre;">buy</div>
<div style="position:absolute;right:840px;top:476.84px;font-size:12px;line-height:12px;color:#000;font-weight:400;letter-spacing:-0.7px;white-space:pre;">0.5</div>
<div style="position:absolute;right:732.5px;top:476.84px;font-size:12px;line-height:12px;color:#000;font-weight:400;letter-spacing:-0.7px;white-space:pre;">3940.00</div>
<div style="position:absolute;right:625.5px;top:476.84px;font-size:12px;line-height:12px;color:#000;font-weight:400;letter-spacing:-0.7px;white-space:pre;">3810.00</div>
<div style="position:absolute;right:518.5px;top:476.84px;font-size:12px;line-height:12px;color:#000;font-weight:400;letter-spacing:-0.7px;white-space:pre;">4070.00</div>
<div style="position:absolute;right:379px;top:476.84px;font-size:12px;line-height:12px;color:#000;font-weight:400;letter-spacing:-0.7px;word-spacing:1px;white-space:pre;">2025.10.13 08:22:04</div>
<div style="position:absolute;right:271.79999999999995px;top:476.84px;font-size:12px;line-height:12px;color:#000;font-weight:400;letter-spacing:-0.7px;white-space:pre;">4070.00</div>
<div style="position:absolute;right:165px;top:476.84px;font-size:12px;line-height:12px;color:#ff0000;font-weight:400;letter-spacing:-0.7px;white-space:pre;">-44.10</div>
<div style="position:absolute;right:21.5px;top:476.84px;font-size:12px;line-height:12px;color:#0000ff;font-weight:400;letter-spacing:-0.7px;word-spacing:1.2px;white-space:pre;">6 500.00</div>
<div style="position:absolute;left:50px;top:493px;width:1299px;height:19px;background:#ebebeb;"></div>
<div style="position:absolute;left:50px;top:512px;width:1299px;height:1px;background:#cacaca;"></div>
<div style="position:absolute;left:188px;top:493px;width:1px;height:20px;background:#cacaca;"></div>
<div style="position:absolute;left:284px;top:493px;width:1px;height:20px;background:#cacaca;"></div>
<div style="position:absolute;left:359px;top:493px;width:1px;height:20px;background:#cacaca;"></div>
<div style="position:absolute;left:423px;top:493px;width:1px;height:20px;background:#cacaca;"></div>
<div style="position:absolute;left:530px;top:493px;width:1px;height:20px;background:#cacaca;"></div>
<div style="position:absolute;left:637px;top:493px;width:1px;height:20px;background:#cacaca;"></div>
<div style="position:absolute;left:744px;top:493px;width:1px;height:20px;background:#cacaca;"></div>
<div style="position:absolute;left:851px;top:493px;width:1px;height:20px;background:#cacaca;"></div>
<div style="position:absolute;left:991px;top:493px;width:1px;height:20px;background:#cacaca;"></div>
<div style="position:absolute;left:1098px;top:493px;width:1px;height:20px;background:#cacaca;"></div>
<div style="position:absolute;left:1205px;top:493px;width:1px;height:20px;background:#cacaca;"></div>
<div style="position:absolute;left:745px;top:493px;width:106px;height:19px;background:#60f060;"></div>
<svg style="position:absolute;left:54px;top:495px;" width="11" height="15" viewBox="0 0 11 15"><rect x="0.5" y="0.5" width="10" height="14" rx="2" fill="#fff" stroke="#1a65b0"/><path d="M4 4.5H7M4 7.5H7" stroke="#1a65b0"/></svg>
<div style="position:absolute;left:71px;top:496.84px;font-size:12px;line-height:12px;color:#000;font-weight:400;letter-spacing:-0.7px;word-spacing:1px;white-space:pre;">2025.10.13 13:43:29</div>
<div style="position:absolute;right:1086.2px;top:496.84px;font-size:12px;line-height:12px;color:#000;font-weight:400;letter-spacing:-0.3px;white-space:pre;">xauusd</div>
<div style="position:absolute;right:1010px;top:496.84px;font-size:12px;line-height:12px;color:#000;font-weight:400;letter-spacing:-0.7px;white-space:pre;">53598002775</div>
<div style="position:absolute;right:947px;top:496.84px;font-size:12px;line-height:12px;color:#000;font-weight:400;letter-spacing:-0.3px;white-space:pre;">buy</div>
<div style="position:absolute;right:840px;top:496.84px;font-size:12px;line-height:12px;color:#000;font-weight:400;letter-spacing:-0.7px;white-space:pre;">0.5</div>
<div style="position:absolute;right:732.5px;top:496.84px;font-size:12px;line-height:12px;color:#000;font-weight:400;letter-spacing:-0.7px;white-space:pre;">4080.00</div>
<div style="position:absolute;right:625.5px;top:496.84px;font-size:12px;line-height:12px;color:#000;font-weight:400;letter-spacing:-0.7px;white-space:pre;">3940.00</div>
<div style="position:absolute;right:518.5px;top:496.84px;font-size:12px;line-height:12px;color:#000;font-weight:400;letter-spacing:-0.7px;white-space:pre;">4220.00</div>
<div style="position:absolute;right:379px;top:496.84px;font-size:12px;line-height:12px;color:#000;font-weight:400;letter-spacing:-0.7px;word-spacing:1px;white-space:pre;">2025.10.16 03:22:58</div>
<div style="position:absolute;right:271.79999999999995px;top:496.84px;font-size:12px;line-height:12px;color:#000;font-weight:400;letter-spacing:-0.7px;white-space:pre;">4220.00</div>
<div style="position:absolute;right:165px;top:496.84px;font-size:12px;line-height:12px;color:#ff0000;font-weight:400;letter-spacing:-0.7px;white-space:pre;">-31.50</div>
<div style="position:absolute;right:21.5px;top:496.84px;font-size:12px;line-height:12px;color:#0000ff;font-weight:400;letter-spacing:-0.7px;word-spacing:1.2px;white-space:pre;">7 000.00</div>
<div style="position:absolute;left:50px;top:532px;width:1299px;height:1px;background:#cacaca;"></div>
<div style="position:absolute;left:188px;top:513px;width:1px;height:20px;background:#cacaca;"></div>
<div style="position:absolute;left:284px;top:513px;width:1px;height:20px;background:#cacaca;"></div>
<div style="position:absolute;left:359px;top:513px;width:1px;height:20px;background:#cacaca;"></div>
<div style="position:absolute;left:423px;top:513px;width:1px;height:20px;background:#cacaca;"></div>
<div style="position:absolute;left:530px;top:513px;width:1px;height:20px;background:#cacaca;"></div>
<div style="position:absolute;left:637px;top:513px;width:1px;height:20px;background:#cacaca;"></div>
<div style="position:absolute;left:744px;top:513px;width:1px;height:20px;background:#cacaca;"></div>
<div style="position:absolute;left:851px;top:513px;width:1px;height:20px;background:#cacaca;"></div>
<div style="position:absolute;left:991px;top:513px;width:1px;height:20px;background:#cacaca;"></div>
<div style="position:absolute;left:1098px;top:513px;width:1px;height:20px;background:#cacaca;"></div>
<div style="position:absolute;left:1205px;top:513px;width:1px;height:20px;background:#cacaca;"></div>
<div style="position:absolute;left:638px;top:513px;width:106px;height:19px;background:#ffa0a0;"></div>
<svg style="position:absolute;left:54px;top:515px;" width="11" height="15" viewBox="0 0 11 15"><rect x="0.5" y="0.5" width="10" height="14" rx="2" fill="#fff" stroke="#1a65b0"/><path d="M4 4.5H7M4 7.5H7" stroke="#1a65b0"/></svg>
<div style="position:absolute;left:71px;top:516.84px;font-size:12px;line-height:12px;color:#000;font-weight:400;letter-spacing:-0.7px;word-spacing:1px;white-space:pre;">2025.10.16 03:22:54</div>
<div style="position:absolute;right:1086.2px;top:516.84px;font-size:12px;line-height:12px;color:#000;font-weight:400;letter-spacing:-0.3px;white-space:pre;">xauusd</div>
<div style="position:absolute;right:1010px;top:516.84px;font-size:12px;line-height:12px;color:#000;font-weight:400;letter-spacing:-0.7px;white-space:pre;">53636493223</div>
<div style="position:absolute;right:947px;top:516.84px;font-size:12px;line-height:12px;color:#000;font-weight:400;letter-spacing:-0.3px;white-space:pre;">buy</div>
<div style="position:absolute;right:840px;top:516.84px;font-size:12px;line-height:12px;color:#000;font-weight:400;letter-spacing:-0.7px;white-space:pre;">0.5</div>
<div style="position:absolute;right:732.5px;top:516.84px;font-size:12px;line-height:12px;color:#000;font-weight:400;letter-spacing:-0.7px;white-space:pre;">4220.00</div>
<div style="position:absolute;right:625.5px;top:516.84px;font-size:12px;line-height:12px;color:#000;font-weight:400;letter-spacing:-0.7px;white-space:pre;">4000.00</div>
<div style="position:absolute;right:518.5px;top:516.84px;font-size:12px;line-height:12px;color:#000;font-weight:400;letter-spacing:-0.7px;white-space:pre;">4440.00</div>
<div style="position:absolute;right:379px;top:516.84px;font-size:12px;line-height:12px;color:#000;font-weight:400;letter-spacing:-0.7px;word-spacing:1px;white-space:pre;">2025.10.27 16:16:29</div>
<div style="position:absolute;right:271.79999999999995px;top:516.84px;font-size:12px;line-height:12px;color:#000;font-weight:400;letter-spacing:-0.7px;white-space:pre;">4000.00</div>
<div style="position:absolute;right:165px;top:516.84px;font-size:12px;line-height:12px;color:#ff0000;font-weight:400;letter-spacing:-0.7px;white-space:pre;">-56.70</div>
<div style="position:absolute;right:21.5px;top:516.84px;font-size:12px;line-height:12px;color:#ff0000;font-weight:400;letter-spacing:-0.7px;word-spacing:1.2px;white-space:pre;">-11 000.00</div>
<div style="position:absolute;left:50px;top:533px;width:1299px;height:19px;background:#ebebeb;"></div>
<div style="position:absolute;left:50px;top:552px;width:1299px;height:1px;background:#cacaca;"></div>
<div style="position:absolute;left:188px;top:533px;width:1px;height:20px;background:#cacaca;"></div>
<div style="position:absolute;left:284px;top:533px;width:1px;height:20px;background:#cacaca;"></div>
<div style="position:absolute;left:359px;top:533px;width:1px;height:20px;background:#cacaca;"></div>
<div style="position:absolute;left:423px;top:533px;width:1px;height:20px;background:#cacaca;"></div>
<div style="position:absolute;left:530px;top:533px;width:1px;height:20px;background:#cacaca;"></div>
<div style="position:absolute;left:637px;top:533px;width:1px;height:20px;background:#cacaca;"></div>
<div style="position:absolute;left:744px;top:533px;width:1px;height:20px;background:#cacaca;"></div>
<div style="position:absolute;left:851px;top:533px;width:1px;height:20px;background:#cacaca;"></div>
<div style="position:absolute;left:991px;top:533px;width:1px;height:20px;background:#cacaca;"></div>
<div style="position:absolute;left:1098px;top:533px;width:1px;height:20px;background:#cacaca;"></div>
<div style="position:absolute;left:1205px;top:533px;width:1px;height:20px;background:#cacaca;"></div>
<div style="position:absolute;left:745px;top:533px;width:106px;height:19px;background:#60f060;"></div>
<svg style="position:absolute;left:54px;top:535px;" width="11" height="15" viewBox="0 0 11 15"><rect x="0.5" y="0.5" width="10" height="14" rx="2" fill="#fff" stroke="#e03a3a"/><path d="M4 4.5H7M4 7.5H7" stroke="#e03a3a"/></svg>
<div style="position:absolute;left:71px;top:536.84px;font-size:12px;line-height:12px;color:#000;font-weight:400;letter-spacing:-0.7px;word-spacing:1px;white-space:pre;">2025.10.21 16:48:11</div>
<div style="position:absolute;right:1086.2px;top:536.84px;font-size:12px;line-height:12px;color:#000;font-weight:400;letter-spacing:-0.3px;white-space:pre;">xauusd</div>
<div style="position:absolute;right:1010px;top:536.84px;font-size:12px;line-height:12px;color:#000;font-weight:400;letter-spacing:-0.7px;white-space:pre;">53583361187</div>
<div style="position:absolute;right:947px;top:536.84px;font-size:12px;line-height:12px;color:#000;font-weight:400;letter-spacing:-0.3px;white-space:pre;">sell</div>
<div style="position:absolute;right:840px;top:536.84px;font-size:12px;line-height:12px;color:#000;font-weight:400;letter-spacing:-0.7px;white-space:pre;">0.5</div>
<div style="position:absolute;right:732.5px;top:536.84px;font-size:12px;line-height:12px;color:#000;font-weight:400;letter-spacing:-0.7px;white-space:pre;">4180.00</div>
<div style="position:absolute;right:625.5px;top:536.84px;font-size:12px;line-height:12px;color:#000;font-weight:400;letter-spacing:-0.7px;white-space:pre;">4380.00</div>
<div style="position:absolute;right:518.5px;top:536.84px;font-size:12px;line-height:12px;color:#000;font-weight:400;letter-spacing:-0.7px;white-space:pre;">3980.00</div>
<div style="position:absolute;right:379px;top:536.84px;font-size:12px;line-height:12px;color:#000;font-weight:400;letter-spacing:-0.7px;word-spacing:1px;white-space:pre;">2025.10.27 17:00:36</div>
<div style="position:absolute;right:271.79999999999995px;top:536.84px;font-size:12px;line-height:12px;color:#000;font-weight:400;letter-spacing:-0.7px;white-space:pre;">3980.00</div>
<div style="position:absolute;right:165px;top:536.84px;font-size:12px;line-height:12px;color:#ff0000;font-weight:400;letter-spacing:-0.7px;white-space:pre;">-13.80</div>
<div style="position:absolute;right:21.5px;top:536.84px;font-size:12px;line-height:12px;color:#0000ff;font-weight:400;letter-spacing:-0.7px;word-spacing:1.2px;white-space:pre;">10 000.00</div>
<div style="position:absolute;left:50px;top:572px;width:1299px;height:1px;background:#cacaca;"></div>
<div style="position:absolute;left:188px;top:553px;width:1px;height:20px;background:#cacaca;"></div>
<div style="position:absolute;left:284px;top:553px;width:1px;height:20px;background:#cacaca;"></div>
<div style="position:absolute;left:359px;top:553px;width:1px;height:20px;background:#cacaca;"></div>
<div style="position:absolute;left:423px;top:553px;width:1px;height:20px;background:#cacaca;"></div>
<div style="position:absolute;left:530px;top:553px;width:1px;height:20px;background:#cacaca;"></div>
<div style="position:absolute;left:637px;top:553px;width:1px;height:20px;background:#cacaca;"></div>
<div style="position:absolute;left:744px;top:553px;width:1px;height:20px;background:#cacaca;"></div>
<div style="position:absolute;left:851px;top:553px;width:1px;height:20px;background:#cacaca;"></div>
<div style="position:absolute;left:991px;top:553px;width:1px;height:20px;background:#cacaca;"></div>
<div style="position:absolute;left:1098px;top:553px;width:1px;height:20px;background:#cacaca;"></div>
<div style="position:absolute;left:1205px;top:553px;width:1px;height:20px;background:#cacaca;"></div>
<div style="position:absolute;left:638px;top:553px;width:106px;height:19px;background:#ffa0a0;"></div>
<svg style="position:absolute;left:54px;top:555px;" width="11" height="15" viewBox="0 0 11 15"><rect x="0.5" y="0.5" width="10" height="14" rx="2" fill="#fff" stroke="#e03a3a"/><path d="M4 4.5H7M4 7.5H7" stroke="#e03a3a"/></svg>
<div style="position:absolute;left:71px;top:556.84px;font-size:12px;line-height:12px;color:#000;font-weight:400;letter-spacing:-0.7px;word-spacing:1px;white-space:pre;">2025.10.27 13:38:14</div>
<div style="position:absolute;right:1086.2px;top:556.84px;font-size:12px;line-height:12px;color:#000;font-weight:400;letter-spacing:-0.3px;white-space:pre;">xauusd</div>
<div style="position:absolute;right:1010px;top:556.84px;font-size:12px;line-height:12px;color:#000;font-weight:400;letter-spacing:-0.7px;white-space:pre;">53737006365</div>
<div style="position:absolute;right:947px;top:556.84px;font-size:12px;line-height:12px;color:#000;font-weight:400;letter-spacing:-0.3px;white-space:pre;">sell</div>
<div style="position:absolute;right:840px;top:556.84px;font-size:12px;line-height:12px;color:#000;font-weight:400;letter-spacing:-0.7px;white-space:pre;">0.5</div>
<div style="position:absolute;right:732.5px;top:556.84px;font-size:12px;line-height:12px;color:#000;font-weight:400;letter-spacing:-0.7px;white-space:pre;">4020.00</div>
<div style="position:absolute;right:625.5px;top:556.84px;font-size:12px;line-height:12px;color:#000;font-weight:400;letter-spacing:-0.7px;white-space:pre;">4160.00</div>
<div style="position:absolute;right:518.5px;top:556.84px;font-size:12px;line-height:12px;color:#000;font-weight:400;letter-spacing:-0.7px;white-space:pre;">3880.00</div>
<div style="position:absolute;right:379px;top:556.84px;font-size:12px;line-height:12px;color:#000;font-weight:400;letter-spacing:-0.7px;word-spacing:1px;white-space:pre;">2025.11.12 17:13:36</div>
<div style="position:absolute;right:271.79999999999995px;top:556.84px;font-size:12px;line-height:12px;color:#000;font-weight:400;letter-spacing:-0.7px;white-space:pre;">4160.00</div>
<div style="position:absolute;right:165px;top:556.84px;font-size:12px;line-height:12px;color:#ff0000;font-weight:400;letter-spacing:-0.7px;white-space:pre;">-36.80</div>
<div style="position:absolute;right:21.5px;top:556.84px;font-size:12px;line-height:12px;color:#ff0000;font-weight:400;letter-spacing:-0.7px;word-spacing:1.2px;white-space:pre;">-7 000.00</div>
<div style="position:absolute;left:50px;top:573px;width:1299px;height:19px;background:#ebebeb;"></div>
<div style="position:absolute;left:50px;top:592px;width:1299px;height:1px;background:#cacaca;"></div>
<div style="position:absolute;left:188px;top:573px;width:1px;height:20px;background:#cacaca;"></div>
<div style="position:absolute;left:284px;top:573px;width:1px;height:20px;background:#cacaca;"></div>
<div style="position:absolute;left:359px;top:573px;width:1px;height:20px;background:#cacaca;"></div>
<div style="position:absolute;left:423px;top:573px;width:1px;height:20px;background:#cacaca;"></div>
<div style="position:absolute;left:530px;top:573px;width:1px;height:20px;background:#cacaca;"></div>
<div style="position:absolute;left:637px;top:573px;width:1px;height:20px;background:#cacaca;"></div>
<div style="position:absolute;left:744px;top:573px;width:1px;height:20px;background:#cacaca;"></div>
<div style="position:absolute;left:851px;top:573px;width:1px;height:20px;background:#cacaca;"></div>
<div style="position:absolute;left:991px;top:573px;width:1px;height:20px;background:#cacaca;"></div>
<div style="position:absolute;left:1098px;top:573px;width:1px;height:20px;background:#cacaca;"></div>
<div style="position:absolute;left:1205px;top:573px;width:1px;height:20px;background:#cacaca;"></div>
<div style="position:absolute;left:745px;top:573px;width:106px;height:19px;background:#60f060;"></div>
<svg style="position:absolute;left:54px;top:575px;" width="11" height="15" viewBox="0 0 11 15"><rect x="0.5" y="0.5" width="10" height="14" rx="2" fill="#fff" stroke="#1a65b0"/><path d="M4 4.5H7M4 7.5H7" stroke="#1a65b0"/></svg>
<div style="position:absolute;left:71px;top:576.84px;font-size:12px;line-height:12px;color:#000;font-weight:400;letter-spacing:-0.7px;word-spacing:1px;white-space:pre;">2025.10.31 00:55:25</div>
<div style="position:absolute;right:1086.2px;top:576.84px;font-size:12px;line-height:12px;color:#000;font-weight:400;letter-spacing:-0.3px;white-space:pre;">xauusd</div>
<div style="position:absolute;right:1010px;top:576.84px;font-size:12px;line-height:12px;color:#000;font-weight:400;letter-spacing:-0.7px;white-space:pre;">53822737893</div>
<div style="position:absolute;right:947px;top:576.84px;font-size:12px;line-height:12px;color:#000;font-weight:400;letter-spacing:-0.3px;white-space:pre;">buy</div>
<div style="position:absolute;right:840px;top:576.84px;font-size:12px;line-height:12px;color:#000;font-weight:400;letter-spacing:-0.7px;white-space:pre;">0.5</div>
<div style="position:absolute;right:732.5px;top:576.84px;font-size:12px;line-height:12px;color:#000;font-weight:400;letter-spacing:-0.7px;white-space:pre;">4040.00</div>
<div style="position:absolute;right:625.5px;top:576.84px;font-size:12px;line-height:12px;color:#000;font-weight:400;letter-spacing:-0.7px;white-space:pre;">3920.00</div>
<div style="position:absolute;right:518.5px;top:576.84px;font-size:12px;line-height:12px;color:#000;font-weight:400;letter-spacing:-0.7px;white-space:pre;">4160.00</div>
<div style="position:absolute;right:379px;top:576.84px;font-size:12px;line-height:12px;color:#000;font-weight:400;letter-spacing:-0.7px;word-spacing:1px;white-space:pre;">2025.11.12 17:13:36</div>
<div style="position:absolute;right:271.79999999999995px;top:576.84px;font-size:12px;line-height:12px;color:#000;font-weight:400;letter-spacing:-0.7px;white-space:pre;">4160.00</div>
<div style="position:absolute;right:165px;top:576.84px;font-size:12px;line-height:12px;color:#ff0000;font-weight:400;letter-spacing:-0.7px;white-space:pre;">-63.00</div>
<div style="position:absolute;right:21.5px;top:576.84px;font-size:12px;line-height:12px;color:#0000ff;font-weight:400;letter-spacing:-0.7px;word-spacing:1.2px;white-space:pre;">6 000.00</div>
<div style="position:absolute;left:50px;top:612px;width:1299px;height:1px;background:#cacaca;"></div>
<div style="position:absolute;left:188px;top:593px;width:1px;height:20px;background:#cacaca;"></div>
<div style="position:absolute;left:284px;top:593px;width:1px;height:20px;background:#cacaca;"></div>
<div style="position:absolute;left:359px;top:593px;width:1px;height:20px;background:#cacaca;"></div>
<div style="position:absolute;left:423px;top:593px;width:1px;height:20px;background:#cacaca;"></div>
<div style="position:absolute;left:530px;top:593px;width:1px;height:20px;background:#cacaca;"></div>
<div style="position:absolute;left:637px;top:593px;width:1px;height:20px;background:#cacaca;"></div>
<div style="position:absolute;left:744px;top:593px;width:1px;height:20px;background:#cacaca;"></div>
<div style="position:absolute;left:851px;top:593px;width:1px;height:20px;background:#cacaca;"></div>
<div style="position:absolute;left:991px;top:593px;width:1px;height:20px;background:#cacaca;"></div>
<div style="position:absolute;left:1098px;top:593px;width:1px;height:20px;background:#cacaca;"></div>
<div style="position:absolute;left:1205px;top:593px;width:1px;height:20px;background:#cacaca;"></div>
<div style="position:absolute;left:638px;top:593px;width:106px;height:19px;background:#ffa0a0;"></div>
<svg style="position:absolute;left:54px;top:595px;" width="11" height="15" viewBox="0 0 11 15"><rect x="0.5" y="0.5" width="10" height="14" rx="2" fill="#fff" stroke="#e03a3a"/><path d="M4 4.5H7M4 7.5H7" stroke="#e03a3a"/></svg>
<div style="position:absolute;left:71px;top:596.84px;font-size:12px;line-height:12px;color:#000;font-weight:400;letter-spacing:-0.7px;word-spacing:1px;white-space:pre;">2025.11.04 16:29:20</div>
<div style="position:absolute;right:1086.2px;top:596.84px;font-size:12px;line-height:12px;color:#000;font-weight:400;letter-spacing:-0.3px;white-space:pre;">xauusd</div>
<div style="position:absolute;right:1010px;top:596.84px;font-size:12px;line-height:12px;color:#000;font-weight:400;letter-spacing:-0.7px;white-space:pre;">53874933726</div>
<div style="position:absolute;right:947px;top:596.84px;font-size:12px;line-height:12px;color:#000;font-weight:400;letter-spacing:-0.3px;white-space:pre;">sell</div>
<div style="position:absolute;right:840px;top:596.84px;font-size:12px;line-height:12px;color:#000;font-weight:400;letter-spacing:-0.7px;white-space:pre;">0.5</div>
<div style="position:absolute;right:732.5px;top:596.84px;font-size:12px;line-height:12px;color:#000;font-weight:400;letter-spacing:-0.7px;white-space:pre;">3960.00</div>
<div style="position:absolute;right:625.5px;top:596.84px;font-size:12px;line-height:12px;color:#000;font-weight:400;letter-spacing:-0.7px;white-space:pre;">4040.00</div>
<div style="position:absolute;right:518.5px;top:596.84px;font-size:12px;line-height:12px;color:#000;font-weight:400;letter-spacing:-0.7px;white-space:pre;">3880.00</div>
<div style="position:absolute;right:379px;top:596.84px;font-size:12px;line-height:12px;color:#000;font-weight:400;letter-spacing:-0.7px;word-spacing:1px;white-space:pre;">2025.11.10 03:21:37</div>
<div style="position:absolute;right:271.79999999999995px;top:596.84px;font-size:12px;line-height:12px;color:#000;font-weight:400;letter-spacing:-0.7px;white-space:pre;">4040.00</div>
<div style="position:absolute;right:165px;top:596.84px;font-size:12px;line-height:12px;color:#ff0000;font-weight:400;letter-spacing:-0.7px;white-space:pre;">-13.80</div>
<div style="position:absolute;right:21.5px;top:596.84px;font-size:12px;line-height:12px;color:#ff0000;font-weight:400;letter-spacing:-0.7px;word-spacing:1.2px;white-space:pre;">-4 000.00</div>
<div style="position:absolute;left:50px;top:613px;width:1299px;height:19px;background:#ebebeb;"></div>
<div style="position:absolute;left:50px;top:632px;width:1299px;height:1px;background:#cacaca;"></div>
<div style="position:absolute;left:188px;top:613px;width:1px;height:20px;background:#cacaca;"></div>
<div style="position:absolute;left:284px;top:613px;width:1px;height:20px;background:#cacaca;"></div>
<div style="position:absolute;left:359px;top:613px;width:1px;height:20px;background:#cacaca;"></div>
<div style="position:absolute;left:423px;top:613px;width:1px;height:20px;background:#cacaca;"></div>
<div style="position:absolute;left:530px;top:613px;width:1px;height:20px;background:#cacaca;"></div>
<div style="position:absolute;left:637px;top:613px;width:1px;height:20px;background:#cacaca;"></div>
<div style="position:absolute;left:744px;top:613px;width:1px;height:20px;background:#cacaca;"></div>
<div style="position:absolute;left:851px;top:613px;width:1px;height:20px;background:#cacaca;"></div>
<div style="position:absolute;left:991px;top:613px;width:1px;height:20px;background:#cacaca;"></div>
<div style="position:absolute;left:1098px;top:613px;width:1px;height:20px;background:#cacaca;"></div>
<div style="position:absolute;left:1205px;top:613px;width:1px;height:20px;background:#cacaca;"></div>
<div style="position:absolute;left:745px;top:613px;width:106px;height:19px;background:#60f060;"></div>
<svg style="position:absolute;left:54px;top:615px;" width="11" height="15" viewBox="0 0 11 15"><rect x="0.5" y="0.5" width="10" height="14" rx="2" fill="#fff" stroke="#1a65b0"/><path d="M4 4.5H7M4 7.5H7" stroke="#1a65b0"/></svg>
<div style="position:absolute;left:71px;top:616.84px;font-size:12px;line-height:12px;color:#000;font-weight:400;letter-spacing:-0.7px;word-spacing:1px;white-space:pre;">2025.11.07 18:35:35</div>
<div style="position:absolute;right:1086.2px;top:616.84px;font-size:12px;line-height:12px;color:#000;font-weight:400;letter-spacing:-0.3px;white-space:pre;">xauusd</div>
<div style="position:absolute;right:1010px;top:616.84px;font-size:12px;line-height:12px;color:#000;font-weight:400;letter-spacing:-0.7px;white-space:pre;">53909220948</div>
<div style="position:absolute;right:947px;top:616.84px;font-size:12px;line-height:12px;color:#000;font-weight:400;letter-spacing:-0.3px;white-space:pre;">buy</div>
<div style="position:absolute;right:840px;top:616.84px;font-size:12px;line-height:12px;color:#000;font-weight:400;letter-spacing:-0.7px;white-space:pre;">0.5</div>
<div style="position:absolute;right:732.5px;top:616.84px;font-size:12px;line-height:12px;color:#000;font-weight:400;letter-spacing:-0.7px;white-space:pre;">4020.00</div>
<div style="position:absolute;right:625.5px;top:616.84px;font-size:12px;line-height:12px;color:#000;font-weight:400;letter-spacing:-0.7px;white-space:pre;">3920.00</div>
<div style="position:absolute;right:518.5px;top:616.84px;font-size:12px;line-height:12px;color:#000;font-weight:400;letter-spacing:-0.7px;white-space:pre;">4120.00</div>
<div style="position:absolute;right:379px;top:616.84px;font-size:12px;line-height:12px;color:#000;font-weight:400;letter-spacing:-0.7px;word-spacing:1px;white-space:pre;">2025.11.11 01:09:35</div>
<div style="position:absolute;right:271.79999999999995px;top:616.84px;font-size:12px;line-height:12px;color:#000;font-weight:400;letter-spacing:-0.7px;white-space:pre;">4120.00</div>
<div style="position:absolute;right:165px;top:616.84px;font-size:12px;line-height:12px;color:#ff0000;font-weight:400;letter-spacing:-0.7px;white-space:pre;">-12.60</div>
<div style="position:absolute;right:21.5px;top:616.84px;font-size:12px;line-height:12px;color:#0000ff;font-weight:400;letter-spacing:-0.7px;word-spacing:1.2px;white-space:pre;">5 000.00</div>
<div style="position:absolute;left:50px;top:652px;width:1299px;height:1px;background:#cacaca;"></div>
<div style="position:absolute;left:188px;top:633px;width:1px;height:20px;background:#cacaca;"></div>
<div style="position:absolute;left:284px;top:633px;width:1px;height:20px;background:#cacaca;"></div>
<div style="position:absolute;left:359px;top:633px;width:1px;height:20px;background:#cacaca;"></div>
<div style="position:absolute;left:423px;top:633px;width:1px;height:20px;background:#cacaca;"></div>
<div style="position:absolute;left:530px;top:633px;width:1px;height:20px;background:#cacaca;"></div>
<div style="position:absolute;left:637px;top:633px;width:1px;height:20px;background:#cacaca;"></div>
<div style="position:absolute;left:744px;top:633px;width:1px;height:20px;background:#cacaca;"></div>
<div style="position:absolute;left:851px;top:633px;width:1px;height:20px;background:#cacaca;"></div>
<div style="position:absolute;left:991px;top:633px;width:1px;height:20px;background:#cacaca;"></div>
<div style="position:absolute;left:1098px;top:633px;width:1px;height:20px;background:#cacaca;"></div>
<div style="position:absolute;left:1205px;top:633px;width:1px;height:20px;background:#cacaca;"></div>
<div style="position:absolute;left:638px;top:633px;width:106px;height:19px;background:#ffa0a0;"></div>
<svg style="position:absolute;left:54px;top:635px;" width="11" height="15" viewBox="0 0 11 15"><rect x="0.5" y="0.5" width="10" height="14" rx="2" fill="#fff" stroke="#1a65b0"/><path d="M4 4.5H7M4 7.5H7" stroke="#1a65b0"/></svg>
<div style="position:absolute;left:71px;top:636.84px;font-size:12px;line-height:12px;color:#000;font-weight:400;letter-spacing:-0.7px;word-spacing:1px;white-space:pre;">2025.11.12 17:13:36</div>
<div style="position:absolute;right:1086.2px;top:636.84px;font-size:12px;line-height:12px;color:#000;font-weight:400;letter-spacing:-0.3px;white-space:pre;">xauusd</div>
<div style="position:absolute;right:1010px;top:636.84px;font-size:12px;line-height:12px;color:#000;font-weight:400;letter-spacing:-0.7px;white-space:pre;">53954316758</div>
<div style="position:absolute;right:947px;top:636.84px;font-size:12px;line-height:12px;color:#000;font-weight:400;letter-spacing:-0.3px;white-space:pre;">buy</div>
<div style="position:absolute;right:840px;top:636.84px;font-size:12px;line-height:12px;color:#000;font-weight:400;letter-spacing:-0.7px;white-space:pre;">0.5</div>
<div style="position:absolute;right:732.5px;top:636.84px;font-size:12px;line-height:12px;color:#000;font-weight:400;letter-spacing:-0.7px;white-space:pre;">4160.00</div>
<div style="position:absolute;right:625.5px;top:636.84px;font-size:12px;line-height:12px;color:#000;font-weight:400;letter-spacing:-0.7px;white-space:pre;">4040.00</div>
<div style="position:absolute;right:518.5px;top:636.84px;font-size:12px;line-height:12px;color:#000;font-weight:400;letter-spacing:-0.7px;white-space:pre;">4280.00</div>
<div style="position:absolute;right:379px;top:636.84px;font-size:12px;line-height:12px;color:#000;font-weight:400;letter-spacing:-0.7px;word-spacing:1px;white-space:pre;">2025.11.14 16:02:10</div>
<div style="position:absolute;right:271.79999999999995px;top:636.84px;font-size:12px;line-height:12px;color:#000;font-weight:400;letter-spacing:-0.7px;white-space:pre;">4040.00</div>
<div style="position:absolute;right:165px;top:636.84px;font-size:12px;line-height:12px;color:#ff0000;font-weight:400;letter-spacing:-0.7px;white-space:pre;">-25.20</div>
<div style="position:absolute;right:21.5px;top:636.84px;font-size:12px;line-height:12px;color:#ff0000;font-weight:400;letter-spacing:-0.7px;word-spacing:1.2px;white-space:pre;">-6 000.00</div>
<div style="position:absolute;left:50px;top:653px;width:1299px;height:19px;background:#ebebeb;"></div>
<div style="position:absolute;left:188px;top:653px;width:1px;height:19px;background:#cacaca;"></div>
<div style="position:absolute;left:284px;top:653px;width:1px;height:19px;background:#cacaca;"></div>
<div style="position:absolute;left:359px;top:653px;width:1px;height:19px;background:#cacaca;"></div>
<div style="position:absolute;left:423px;top:653px;width:1px;height:19px;background:#cacaca;"></div>
<div style="position:absolute;left:530px;top:653px;width:1px;height:19px;background:#cacaca;"></div>
<div style="position:absolute;left:637px;top:653px;width:1px;height:19px;background:#cacaca;"></div>
<div style="position:absolute;left:744px;top:653px;width:1px;height:19px;background:#cacaca;"></div>
<div style="position:absolute;left:851px;top:653px;width:1px;height:19px;background:#cacaca;"></div>
<div style="position:absolute;left:991px;top:653px;width:1px;height:19px;background:#cacaca;"></div>
<div style="position:absolute;left:1098px;top:653px;width:1px;height:19px;background:#cacaca;"></div>
<div style="position:absolute;left:1205px;top:653px;width:1px;height:19px;background:#cacaca;"></div>
<div style="position:absolute;left:745px;top:653px;width:106px;height:19px;background:#60f060;"></div>
<svg style="position:absolute;left:54px;top:655px;" width="11" height="15" viewBox="0 0 11 15"><rect x="0.5" y="0.5" width="10" height="14" rx="2" fill="#fff" stroke="#1a65b0"/><path d="M4 4.5H7M4 7.5H7" stroke="#1a65b0"/></svg>
<div style="position:absolute;left:71px;top:656.84px;font-size:12px;line-height:12px;color:#000;font-weight:400;letter-spacing:-0.7px;word-spacing:1px;white-space:pre;">2025.11.19 11:46:11</div>
<div style="position:absolute;right:1086.2px;top:656.84px;font-size:12px;line-height:12px;color:#000;font-weight:400;letter-spacing:-0.3px;white-space:pre;">xauusd</div>
<div style="position:absolute;right:1010px;top:656.84px;font-size:12px;line-height:12px;color:#000;font-weight:400;letter-spacing:-0.7px;white-space:pre;">54061849502</div>
<div style="position:absolute;right:947px;top:656.84px;font-size:12px;line-height:12px;color:#000;font-weight:400;letter-spacing:-0.3px;white-space:pre;">buy</div>
<div style="position:absolute;right:840px;top:656.84px;font-size:12px;line-height:12px;color:#000;font-weight:400;letter-spacing:-0.7px;white-space:pre;">0.5</div>
<div style="position:absolute;right:732.5px;top:656.84px;font-size:12px;line-height:12px;color:#000;font-weight:400;letter-spacing:-0.7px;white-space:pre;">4100.00</div>
<div style="position:absolute;right:625.5px;top:656.84px;font-size:12px;line-height:12px;color:#000;font-weight:400;letter-spacing:-0.7px;white-space:pre;">3990.00</div>
<div style="position:absolute;right:518.5px;top:656.84px;font-size:12px;line-height:12px;color:#000;font-weight:400;letter-spacing:-0.7px;white-space:pre;">4210.00</div>
<div style="position:absolute;right:379px;top:656.84px;font-size:12px;line-height:12px;color:#000;font-weight:400;letter-spacing:-0.7px;word-spacing:1px;white-space:pre;">2025.11.28 18:29:13</div>
<div style="position:absolute;right:271.79999999999995px;top:656.84px;font-size:12px;line-height:12px;color:#000;font-weight:400;letter-spacing:-0.7px;white-space:pre;">4210.00</div>
<div style="position:absolute;right:165px;top:656.84px;font-size:12px;line-height:12px;color:#ff0000;font-weight:400;letter-spacing:-0.7px;white-space:pre;">-69.30</div>
<div style="position:absolute;right:21.5px;top:656.84px;font-size:12px;line-height:12px;color:#0000ff;font-weight:400;letter-spacing:-0.7px;word-spacing:1.2px;white-space:pre;">5 500.00</div>
<div style="position:absolute;left:50px;top:672px;width:1299px;height:21px;background:#c8c8c8;"></div>
<svg style="position:absolute;left:54px;top:676px;" width="12" height="12" viewBox="0 0 12 12"><circle cx="6" cy="6" r="5.2" fill="none" stroke="#000" stroke-width="1"/><path d="M6 3V9M3 6H9" stroke="#000" stroke-width="1"/></svg>
<div style="position:absolute;left:71px;top:676.84px;font-size:12px;line-height:12px;color:#000;font-weight:700;letter-spacing:-0.15px;white-space:pre;">Profitto: 20 039.34</div>
<div style="position:absolute;left:182px;top:676.84px;font-size:12px;line-height:12px;color:#000;font-weight:700;letter-spacing:-0.15px;white-space:pre;">Credito: 0.00</div>
<div style="position:absolute;left:259.5px;top:676.84px;font-size:12px;line-height:12px;color:#000;font-weight:700;letter-spacing:-0.15px;white-space:pre;">Deposito: 10 000.00</div>
<div style="position:absolute;left:376.8px;top:676.84px;font-size:12px;line-height:12px;color:#000;font-weight:700;letter-spacing:-0.15px;white-space:pre;">Prelievo: 0.00</div>
<div style="position:absolute;left:458.8px;top:676.84px;font-size:12px;line-height:12px;color:#000;font-weight:700;letter-spacing:-0.15px;white-space:pre;">Bilancio: 30 039.34</div>
<div style="position:absolute;right:164px;top:676.84px;font-size:12px;line-height:12px;color:#000;font-weight:700;letter-spacing:0.2px;white-space:pre;">-560.66</div>
<div style="position:absolute;right:20.5px;top:676.84px;font-size:12px;line-height:12px;color:#000;font-weight:700;letter-spacing:0.2px;white-space:pre;">20 600.00</div>
<div style="position:absolute;left:1350px;top:149px;width:16px;height:551px;background:#f0f0f0;"></div>
<svg style="position:absolute;left:1353px;top:154px;" width="9" height="8" viewBox="0 0 9 8"><path d="M1 6.5L4.5 2.5L8 6.5" fill="none" stroke="#505050" stroke-width="1.9"/></svg>
<div style="position:absolute;left:1350px;top:321px;width:15px;height:365px;background:#cdcdcd;"></div>
<svg style="position:absolute;left:1353px;top:690px;" width="9" height="8" viewBox="0 0 9 8"><path d="M1 1.5L4.5 5.5L8 1.5" fill="none" stroke="#505050" stroke-width="1.9"/></svg>
</body></html>
